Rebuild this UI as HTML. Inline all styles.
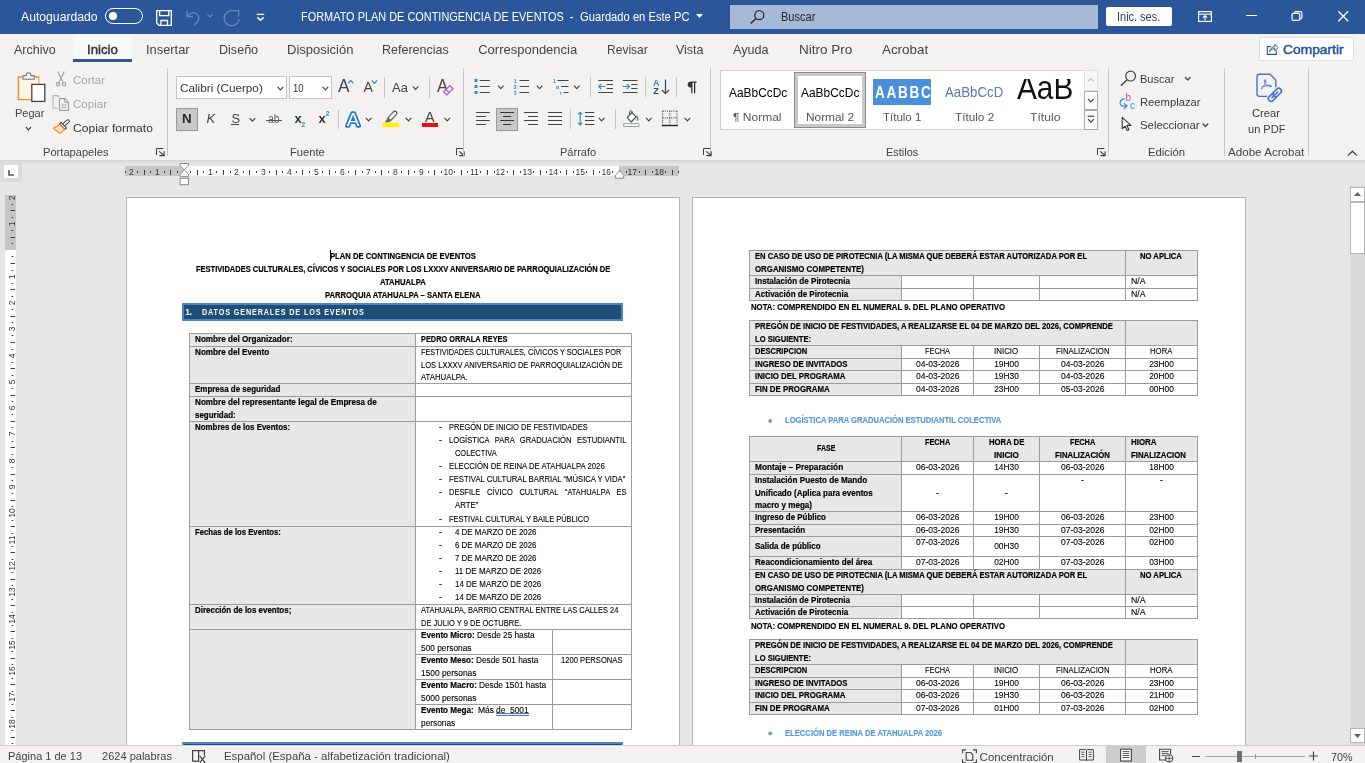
<!DOCTYPE html>
<html lang="es"><head><meta charset="utf-8"><title>FORMATO PLAN DE CONTINGENCIA DE EVENTOS - Word</title><style>
html,body{margin:0;padding:0;}
body{width:1365px;height:763px;overflow:hidden;position:relative;background:#e6e6e6;font-family:"Liberation Sans",sans-serif;}
#app{position:absolute;left:0;top:0;width:1365px;height:763px;overflow:hidden;will-change:transform;}
.b{position:absolute;box-sizing:border-box;display:block;}
.t{position:absolute;white-space:pre;line-height:1em;display:block;transform-origin:0 0;}
svg{overflow:visible;}
</style></head><body><div id="app">
<div class="b" style="left:0px;top:0px;width:1365px;height:34px;background:#2b579a;"></div>
<span class="t" style="left:21.00px;top:11px;font-size:12px;color:#fff;transform:scaleX(1.0159);">Autoguardado</span>
<div class="b" style="left:105px;top:8px;width:38px;height:16px;border:1.4px solid #fff;border-radius:8px;"></div>
<div class="b" style="left:108.5px;top:12px;width:8px;height:8px;background:#fff;border-radius:4px;"></div>
<svg class="b" style="left:156px;top:10px;" width="16" height="16" viewBox="0 0 16 16"><path d="M0.7 0.7h14.6v14.6h-12.2l-2.4-2.4z" fill="none" stroke="#fff" stroke-width="1.3"/><path d="M3.6 0.7v5h9.2v-5M4.9 15.3v-4.8h6.6v4.8" fill="none" stroke="#fff" stroke-width="1.3"/></svg>
<svg class="b" style="left:186px;top:9px;" width="15" height="17" viewBox="0 0 15 17"><path d="M1 1.5v6h6M1.2 7.2C4 3.2 9 2.6 11.6 5.6c2.6 3 1.2 7.6-3.6 10.4" fill="none" stroke="#6487c5" stroke-width="1.3"/></svg>
<svg class="b" style="left:207px;top:14px;" width="6" height="4" viewBox="0 0 6 4"><path d="M0.5 0.5l2.5 2.5l2.5-2.5" fill="none" stroke="#6487c5" stroke-width="1.1"/></svg>
<svg class="b" style="left:223px;top:9px;" width="18" height="18" viewBox="0 0 18 18"><path d="M15.7 7.4V1.7H8.6A7.5 7.5 0 1 0 16.1 10" fill="none" stroke="#6487c5" stroke-width="1.3"/></svg>
<svg class="b" style="left:256px;top:13px;" width="9" height="9" viewBox="0 0 9 9"><g transform="translate(0.6 0.4)"><path d="M0.2 1h7.4" stroke="#fff" stroke-width="1.3"/><path d="M0.8 4l3.1 2.8l3.1-2.8" fill="none" stroke="#fff" stroke-width="1.5"/></g></svg>
<span class="t" style="left:300.60px;top:11px;font-size:12px;color:#fff;transform:scaleX(0.9102);">FORMATO PLAN DE CONTINGENCIA DE EVENTOS</span>
<span class="t" style="left:569.40px;top:11px;font-size:12px;color:#fff;">-</span>
<span class="t" style="left:580.30px;top:11px;font-size:12px;color:#fff;transform:scaleX(0.9327);">Guardado en Este PC</span>
<svg class="b" style="left:696px;top:14px;" width="7" height="4" viewBox="0 0 7 4"><path d="M0 0h7l-3.5 4z" fill="#fff"/></svg>
<div class="b" style="left:730px;top:5px;width:368px;height:24px;background:#a6b9d6;"></div>
<svg class="b" style="left:750px;top:10px;" width="15" height="14" viewBox="0 0 15 14"><circle cx="9.3" cy="5.2" r="4.5" fill="none" stroke="#2a2a2a" stroke-width="1.3"/><path d="M6 8.6l-5.3 5" stroke="#2a2a2a" stroke-width="1.4"/></svg>
<span class="t" style="left:780.60px;top:11px;font-size:12px;color:#262626;transform:scaleX(0.9211);">Buscar</span>
<div class="b" style="left:1106px;top:7px;width:66px;height:19px;background:#fff;border-radius:2px;"></div>
<span class="t" style="left:1117.30px;top:11px;font-size:12px;color:#2b3f63;transform:scaleX(0.9124);">Inic. ses.</span>
<svg class="b" style="left:1198px;top:11px;" width="14" height="11" viewBox="0 0 14 11"><rect x="0.6" y="0.6" width="12.8" height="9.8" fill="none" stroke="#fff" stroke-width="1.2"/><path d="M0.6 3.2h12.8" stroke="#fff" stroke-width="1.1"/><path d="M7 9.2v-4.6M4.9 6.6l2.1-2.1l2.1 2.1" fill="none" stroke="#fff" stroke-width="1.1"/></svg>
<div class="b" style="left:1246px;top:15px;width:10.5px;height:1.2px;background:#fff;"></div>
<svg class="b" style="left:1291px;top:11px;" width="12" height="10" viewBox="0 0 12 10"><g transform="translate(0.5 0)"><rect x="0.6" y="2.4" width="7.6" height="7" rx="1.2" fill="none" stroke="#fff" stroke-width="1.2"/><path d="M2.8 2.2v-0.4c0-0.8 0.5-1.2 1.3-1.2h5.1c0.8 0 1.2 0.5 1.2 1.3v4.6c0 0.8-0.5 1.3-1.3 1.3h-0.7" fill="none" stroke="#fff" stroke-width="1.2"/></g></svg>
<svg class="b" style="left:1338px;top:11px;" width="11" height="11" viewBox="0 0 11 11"><path d="M0.3 0.3l9.9 9.9M10.2 0.3l-9.9 9.9" stroke="#fff" stroke-width="1.3"/></svg>
<div class="b" style="left:0px;top:34px;width:1365px;height:126px;background:#f3f2f1;"></div>
<div class="b" style="left:0;top:160px;width:1365px;height:5px;background:linear-gradient(#d3d3d3,#dfdfdf 45%,#e6e6e6)"></div>
<div class="b" style="left:73px;top:34px;width:59px;height:26px;background:#f8f8f8;"></div>
<div class="b" style="left:73px;top:59px;width:59px;height:3px;background:#2b579a;"></div>
<span class="t" style="left:14.30px;top:43px;font-size:13px;color:#444;transform:scaleX(0.9620);">Archivo</span>
<span class="t" style="left:146.20px;top:43px;font-size:13px;color:#444;transform:scaleX(0.9893);">Insertar</span>
<span class="t" style="left:219.20px;top:43px;font-size:13px;color:#444;transform:scaleX(0.9662);">Diseño</span>
<span class="t" style="left:287.00px;top:43px;font-size:13px;color:#444;">Disposición</span>
<span class="t" style="left:382.10px;top:43px;font-size:13px;color:#444;transform:scaleX(0.9615);">Referencias</span>
<span class="t" style="left:478.20px;top:43px;font-size:13px;color:#444;">Correspondencia</span>
<span class="t" style="left:606.50px;top:43px;font-size:13px;color:#444;transform:scaleX(0.9259);">Revisar</span>
<span class="t" style="left:676.20px;top:43px;font-size:13px;color:#444;transform:scaleX(0.9558);">Vista</span>
<span class="t" style="left:733.20px;top:43px;font-size:13px;color:#444;transform:scaleX(0.9720);">Ayuda</span>
<span class="t" style="left:799.40px;top:43px;font-size:13px;color:#444;transform:scaleX(1.0392);">Nitro Pro</span>
<span class="t" style="left:882.10px;top:43px;font-size:13px;color:#444;transform:scaleX(1.0290);">Acrobat</span>
<span class="t" style="left:86.60px;top:43px;font-size:13px;color:#333;transform:scaleX(1.0149);-webkit-text-stroke:0.45px #333;">Inicio</span>
<div class="b" style="left:1259px;top:37px;width:95px;height:24px;background:#fff;border:1px solid #e1dfdd;border-radius:2px;"></div>
<svg class="b" style="left:1266px;top:43px;" width="13" height="12" viewBox="0 0 13 12"><g transform="translate(0.5 0)"><path d="M4.4 3.6h-3.6v7.8h9v-3.6" fill="none" stroke="#2b579a" stroke-width="1.1"/><path d="M3.2 8.6c0.3-3 2.2-4.8 5.2-4.9v-2.4l3.2 3.3l-3.2 3.3v-2.3c-2.4 0-3.9 0.9-5.2 3z" fill="none" stroke="#2b579a" stroke-width="1" stroke-linejoin="round"/></g></svg>
<span class="t" style="left:1283.20px;top:43px;font-size:13px;color:#2b579a;transform:scaleX(1.0619);-webkit-text-stroke:0.5px #2b579a;">Compartir</span>
<svg class="b" style="left:17px;top:71px;" width="29" height="32" viewBox="0 0 29 32"><path d="M5.5 6h-4v22.5h13" fill="none" stroke="#e8912d" stroke-width="1.6"/><path d="M17.5 6h4v8" fill="none" stroke="#e8912d" stroke-width="1.6"/><path d="M2.4 7h19v21h-19z" fill="#fdf3e6" stroke="none"/><path d="M6 8.2v-3.6h3.2c0-1.8 1-2.9 2.4-2.9s2.4 1.1 2.4 2.9h3.2v3.6z" fill="#f3f2f1" stroke="#7a7a7a" stroke-width="1.1"/><rect x="14.8" y="13.4" width="13" height="17" fill="#fff" stroke="#444" stroke-width="1.3"/></svg>
<span class="t" style="left:14.50px;top:108px;font-size:11.5px;color:#444;transform:scaleX(0.9548);">Pegar</span>
<svg class="b" style="left:25px;top:127px;" width="6" height="3" viewBox="0 0 6 3"><g transform="translate(0.8 0)"><path d="M0 0l2.6 2.8l2.6 -2.8" fill="none" stroke="#444" stroke-width="1.2"/></g></svg>
<svg class="b" style="left:55px;top:71px;" width="12" height="16" viewBox="0 0 12 16"><g transform="translate(0.5 0)"><path d="M2.2 0.5l5.4 11M8.8 0.5l-5.4 11" stroke="#a0a0a0" stroke-width="1.1" fill="none"/><circle cx="2.4" cy="13.3" r="1.7" fill="none" stroke="#a0a0a0" stroke-width="1.1"/><circle cx="8.6" cy="13.3" r="1.7" fill="none" stroke="#a0a0a0" stroke-width="1.1"/></g></svg>
<span class="t" style="left:72.70px;top:75px;font-size:11.5px;color:#a6a6a6;transform:scaleX(1.0047);">Cortar</span>
<svg class="b" style="left:52px;top:95px;" width="18" height="16" viewBox="0 0 18 16"><g transform="translate(0.5 0)"><path d="M6 2.2v-1.6h-5.4v12.6h4.6" fill="none" stroke="#b4b4b4" stroke-width="1.1"/><path d="M7 3.6h5.4l3.6 3.6v8.2h-9z" fill="#f3f2f1" stroke="#a0a0a0" stroke-width="1.1"/><path d="M12.2 3.8v3.6h3.6" fill="none" stroke="#a0a0a0" stroke-width="1"/><path d="M9 10h5M9 12.4h5" stroke="#a0a0a0" stroke-width="1"/></g></svg>
<span class="t" style="left:72.70px;top:99px;font-size:11.5px;color:#a6a6a6;transform:scaleX(1.0066);">Copiar</span>
<svg class="b" style="left:53px;top:119px;" width="17" height="15" viewBox="0 0 17 15"><path d="M10.2 4.6l3.6-3.4c0.8-0.7 1.7-0.6 2.2 0c0.5 0.6 0.5 1.5-0.2 2.1l-3.8 3.3" fill="#fff" stroke="#444" stroke-width="1.1"/><path d="M8.2 3.4l5.2 5.6l-1.6 1.5l-5.2-5.6z" fill="#fff" stroke="#444" stroke-width="1.1"/><path d="M6.4 5.2l5 5.4l-4.6 3.8l-6.2-5.2c2.2-0.6 4.2-1.8 5.8-4z" fill="#fbe3c4" stroke="#e8912d" stroke-width="1.2" stroke-linejoin="round"/></svg>
<span class="t" style="left:72.70px;top:123px;font-size:11.5px;color:#333;transform:scaleX(1.0505);">Copiar formato</span>
<span class="t" style="left:42.80px;top:147px;font-size:11.5px;color:#444;transform:scaleX(0.9665);">Portapapeles</span>
<svg class="b" style="left:156px;top:148px;" width="9" height="9" viewBox="0 0 9 9"><path d="M0.5 7v-6.5h6.8" fill="none" stroke="#3c3c3c" stroke-width="1"/><path d="M3.2 3.3l4.8 4.2M3.4 7.6h4.7v-4.4" fill="none" stroke="#3c3c3c" stroke-width="1.05"/></svg>
<div class="b" style="left:167px;top:68px;width:1px;height:88px;background:#c8c6c4;"></div>
<div class="b" style="left:176px;top:76px;width:110.5px;height:22.5px;background:#fff;border:1px solid #c8c6c4;"></div>
<span class="t" style="left:179.80px;top:83px;font-size:11.5px;color:#333;transform:scaleX(1.0202);">Calibri (Cuerpo)</span>
<svg class="b" style="left:277px;top:86px;" width="7" height="4" viewBox="0 0 7 4"><g transform="translate(0.6 0.8)"><path d="M0 0l2.8 3l2.8 -3" fill="none" stroke="#444" stroke-width="1.2"/></g></svg>
<div class="b" style="left:289.3px;top:76px;width:42.5px;height:22.5px;background:#fff;border:1px solid #c8c6c4;"></div>
<span class="t" style="left:293.00px;top:83px;font-size:11.5px;color:#333;transform:scaleX(0.8287);">10</span>
<svg class="b" style="left:322px;top:86px;" width="7" height="4" viewBox="0 0 7 4"><g transform="translate(0.6 0.8)"><path d="M0 0l2.8 3l2.8 -3" fill="none" stroke="#444" stroke-width="1.2"/></g></svg>
<div class="b" style="left:176px;top:108px;width:22px;height:22.7px;background:#c8c8c8;border:1px solid #9a9a9a;"></div>
<span class="t" style="left:181.60px;top:112px;font-size:13px;color:#262626;font-weight:700;transform:scaleX(1.0226);">N</span>
<span class="t" style="left:206.60px;top:112px;font-size:13px;color:#444;font-style:italic;">K</span>
<span class="t" style="left:231.60px;top:112px;font-size:13px;color:#444;">S</span>
<div class="b" style="left:231px;top:124px;width:8px;height:1.1px;background:#444;"></div>
<svg class="b" style="left:249px;top:118px;" width="7" height="4" viewBox="0 0 7 4"><g transform="translate(0.6 0.2)"><path d="M0 0l2.8 3l2.8 -3" fill="none" stroke="#444" stroke-width="1.2"/></g></svg>
<span class="t" style="left:268.20px;top:113px;font-size:12.5px;color:#666;transform:scaleX(0.8343);">ab</span>
<div class="b" style="left:266.3px;top:119.7px;width:15.5px;height:1px;background:#555;"></div>
<span class="t" style="left:294.40px;top:112px;font-size:13px;color:#333;font-weight:700;">x</span>
<span class="t" style="left:301.40px;top:122px;font-size:6.5px;color:#2e8bd6;font-weight:700;">2</span>
<span class="t" style="left:318.40px;top:112px;font-size:13px;color:#333;font-weight:700;">x</span>
<span class="t" style="left:325.70px;top:111px;font-size:6.5px;color:#2e8bd6;font-weight:700;">2</span>
<div class="b" style="left:337.5px;top:110px;width:1px;height:19.400000000000006px;background:#c8c6c4;"></div>
<span class="t" style="left:338.00px;top:77px;font-size:18px;color:#444;transform:scaleX(0.9579);">A</span>
<svg class="b" style="left:348px;top:80px;" width="6" height="4" viewBox="0 0 6 4"><g transform="translate(0.1 0.4)"><path d="M0 3l2.6-3l2.6 3" fill="none" stroke="#2e8bd6" stroke-width="1.2"/></g></svg>
<span class="t" style="left:363.60px;top:80px;font-size:14px;color:#444;">A</span>
<svg class="b" style="left:371px;top:80px;" width="7" height="4" viewBox="0 0 7 4"><g transform="translate(0.9 0.4)"><path d="M0 0l2.6 3l2.6-3" fill="none" stroke="#2e8bd6" stroke-width="1.2"/></g></svg>
<div class="b" style="left:384px;top:77px;width:1px;height:20.700000000000003px;background:#c8c6c4;"></div>
<span class="t" style="left:392.40px;top:81px;font-size:13.5px;color:#444;transform:scaleX(0.9629);">Aa</span>
<svg class="b" style="left:412px;top:86px;" width="7" height="4" viewBox="0 0 7 4"><g transform="translate(0.8 0.4)"><path d="M0 0l2.8 3l2.8 -3" fill="none" stroke="#444" stroke-width="1.2"/></g></svg>
<div class="b" style="left:429px;top:77px;width:1px;height:20.700000000000003px;background:#c8c6c4;"></div>
<span class="t" style="left:437.00px;top:77px;font-size:18px;color:#444;transform:scaleX(0.9162);">A</span>
<svg class="b" style="left:443px;top:85px;" width="11" height="11" viewBox="0 0 11 11"><path d="M0.6 6.8l6.2-6.2l3.2 3.2l-6.2 6.2z" fill="#f3f2f1" stroke="#b04fc4" stroke-width="1.2"/><path d="M3 4.4l3.2 3.2" stroke="#b04fc4" stroke-width="1.1"/></svg>
<svg class="b" style="left:342px;top:108px;" width="22" height="22" viewBox="0 0 22 22"><text x="11" y="17.6" text-anchor="middle" font-family="Liberation Sans" font-size="19" font-weight="400" fill="#fff" stroke="#2576cf" stroke-width="3.4" paint-order="stroke" stroke-linejoin="round">A</text></svg>
<svg class="b" style="left:365px;top:117px;" width="7" height="4" viewBox="0 0 7 4"><g transform="translate(0.8 0.8)"><path d="M0 0l2.8 3l2.8 -3" fill="none" stroke="#444" stroke-width="1.2"/></g></svg>
<svg class="b" style="left:382px;top:110px;" width="18" height="18" viewBox="0 0 18 18"><g transform="translate(0.5 0.5)"><path d="M10.8 1.4c0.9-0.9 2.2-1 3-0.2c0.8 0.8 0.7 2-0.1 2.9l-5.6 6l-2.7-2.6z" fill="#fff" stroke="#555" stroke-width="1.1"/><path d="M5.4 7.5l2.7 2.6l-1.6 1.3l-3.6 0.3z" fill="#666" stroke="#666" stroke-width="0.6"/><rect x="0.3" y="12.3" width="16.2" height="4.2" fill="#fff200"/></g></svg>
<svg class="b" style="left:405px;top:117px;" width="7" height="4" viewBox="0 0 7 4"><g transform="translate(0.7 0.8)"><path d="M0 0l2.8 3l2.8 -3" fill="none" stroke="#444" stroke-width="1.2"/></g></svg>
<span class="t" style="left:425.20px;top:109px;font-size:15px;color:#444;transform:scaleX(0.9595);">A</span>
<div class="b" style="left:422px;top:122.8px;width:16px;height:4.2px;background:#e60f0f;"></div>
<svg class="b" style="left:444px;top:117px;" width="7" height="4" viewBox="0 0 7 4"><g transform="translate(0.5 0.8)"><path d="M0 0l2.8 3l2.8 -3" fill="none" stroke="#444" stroke-width="1.2"/></g></svg>
<span class="t" style="left:289.80px;top:147px;font-size:11.5px;color:#444;transform:scaleX(0.9720);">Fuente</span>
<svg class="b" style="left:456px;top:148px;" width="9" height="9" viewBox="0 0 9 9"><path d="M0.5 7v-6.5h6.8" fill="none" stroke="#3c3c3c" stroke-width="1"/><path d="M3.2 3.3l4.8 4.2M3.4 7.6h4.7v-4.4" fill="none" stroke="#3c3c3c" stroke-width="1.05"/></svg>
<div class="b" style="left:463px;top:68px;width:1px;height:88px;background:#c8c6c4;"></div>
<svg class="b" style="left:474px;top:79px;" width="17" height="16" viewBox="0 0 17 16"><g transform="translate(0.5 0)"><rect x="0" y="0" width="3" height="3" fill="#2e8bd6"/><rect x="0" y="6" width="3" height="3" fill="#2e8bd6"/><rect x="0" y="12" width="3" height="3" fill="#2e8bd6"/><path d="M5.2 1.5H15.2M5.2 7.5H15.2M5.2 13.5H15.2" stroke="#444" stroke-width="1.1" fill="none"/></g></svg>
<svg class="b" style="left:498px;top:85px;" width="6" height="4" viewBox="0 0 6 4"><g transform="translate(0 0.6)"><path d="M0 0l2.8 3l2.8 -3" fill="none" stroke="#444" stroke-width="1.2"/></g></svg>
<svg class="b" style="left:513px;top:79px;" width="17" height="16" viewBox="0 0 17 16"><g transform="translate(0.5 0)"><text x="0.2" y="3.8" font-family="Liberation Sans" font-size="5.2" font-weight="700" fill="#2e8bd6">1</text><text x="0.2" y="9.8" font-family="Liberation Sans" font-size="5.2" font-weight="700" fill="#2e8bd6">2</text><text x="0.2" y="15.8" font-family="Liberation Sans" font-size="5.2" font-weight="700" fill="#2e8bd6">3</text><path d="M6 1.5H15.6M6 7.5H15.6M6 13.5H15.6" stroke="#444" stroke-width="1.1" fill="none"/></g></svg>
<svg class="b" style="left:536px;top:85px;" width="7" height="4" viewBox="0 0 7 4"><g transform="translate(0.8 0.6)"><path d="M0 0l2.8 3l2.8 -3" fill="none" stroke="#444" stroke-width="1.2"/></g></svg>
<svg class="b" style="left:552px;top:79px;" width="17" height="16" viewBox="0 0 17 16"><g transform="translate(0.9 0)"><text x="0.2" y="3.8" font-family="Liberation Sans" font-size="5.2" font-weight="700" fill="#2e8bd6">1</text><text x="3.2" y="9.8" font-family="Liberation Sans" font-size="5.6" font-weight="700" fill="#2e8bd6">a</text><text x="7" y="15.8" font-family="Liberation Sans" font-size="5.6" font-weight="700" fill="#2e8bd6">i</text><path d="M4.6 1.5H15.6M8.2 7.5H15.6M10.8 13.5H15.6" stroke="#444" stroke-width="1.1" fill="none"/></g></svg>
<svg class="b" style="left:574px;top:85px;" width="6" height="4" viewBox="0 0 6 4"><g transform="translate(0 0.6)"><path d="M0 0l2.8 3l2.8 -3" fill="none" stroke="#444" stroke-width="1.2"/></g></svg>
<div class="b" style="left:590.3px;top:77.2px;width:1px;height:20.099999999999994px;background:#c8c6c4;"></div>
<svg class="b" style="left:598px;top:79px;" width="16" height="15" viewBox="0 0 16 15"><g transform="translate(0.3 0.5)"><path d="M0 1H14.7M8.4 5H14.7M8.4 9H14.7M0 13H14.7" stroke="#444" stroke-width="1.1" fill="none"/><path d="M0.4 7h6.6M3 4.4l-2.6 2.6l2.6 2.6" fill="none" stroke="#2e8bd6" stroke-width="1.2"/></g></svg>
<svg class="b" style="left:622px;top:79px;" width="16" height="15" viewBox="0 0 16 15"><g transform="translate(0.8 0.5)"><path d="M0 1H14.7M8.4 5H14.7M8.4 9H14.7M0 13H14.7" stroke="#444" stroke-width="1.1" fill="none"/><path d="M0 7h6.6M4 4.4l2.6 2.6l-2.6 2.6" fill="none" stroke="#2e8bd6" stroke-width="1.2"/></g></svg>
<div class="b" style="left:645.2px;top:77.2px;width:1px;height:20.099999999999994px;background:#c8c6c4;"></div>
<span class="t" style="left:653.00px;top:79px;font-size:9px;color:#2e8bd6;font-weight:700;">A</span>
<span class="t" style="left:653.20px;top:87px;font-size:9px;color:#444;font-weight:700;">Z</span>
<svg class="b" style="left:661px;top:79px;" width="9" height="16" viewBox="0 0 9 16"><g transform="translate(0.5 0.5)"><path d="M4 0v14M0.4 10.4l3.6 3.8l3.6-3.8" fill="none" stroke="#444" stroke-width="1.2"/></g></svg>
<div class="b" style="left:676.3px;top:77.2px;width:1px;height:20.099999999999994px;background:#c8c6c4;"></div>
<svg class="b" style="left:686px;top:81px;" width="11" height="13" viewBox="0 0 11 13"><g transform="translate(0.8 0.3)"><path d="M5 0.1h4.8v1.4h-1.3v10.4h-1.3v-10.4h-1.5v10.4h-1.3v-5.6c-2.2 0-3.6-1.2-3.6-3.1c0-1.9 1.5-3.1 4.2-3.1z" fill="#333"/></g></svg>
<div class="b" style="left:710px;top:68px;width:1px;height:88px;background:#c8c6c4;"></div>
<svg class="b" style="left:476px;top:111px;" width="14" height="15" viewBox="0 0 14 15"><g transform="translate(0 0.5)"><path d="M0 1H13.8M0 5H9.8M0 9H13.8M0 13H9.8" stroke="#444" stroke-width="1.1" fill="none"/></g></svg>
<div class="b" style="left:496px;top:108px;width:22px;height:22.9px;background:#c8c8c8;border:1px solid #9a9a9a;"></div>
<svg class="b" style="left:500px;top:111px;" width="15" height="15" viewBox="0 0 15 15"><g transform="translate(0.2 0.5)"><path d="M0 1H13.9M2.8 5H11M0 9H13.9M2.8 13H11" stroke="#333" stroke-width="1.1" fill="none"/></g></svg>
<svg class="b" style="left:524px;top:111px;" width="14" height="15" viewBox="0 0 14 15"><g transform="translate(0 0.5)"><path d="M0 1H13.9M4 5H13.9M0 9H13.9M4 13H13.9" stroke="#444" stroke-width="1.1" fill="none"/></g></svg>
<svg class="b" style="left:547px;top:111px;" width="16" height="15" viewBox="0 0 16 15"><g transform="translate(0.9 0.5)"><path d="M0 1H14.2M0 5H14.2M0 9H14.2M0 13H14.2" stroke="#444" stroke-width="1.1" fill="none"/></g></svg>
<div class="b" style="left:570.4px;top:109px;width:1px;height:20px;background:#c8c6c4;"></div>
<svg class="b" style="left:578px;top:111px;" width="17" height="15" viewBox="0 0 17 15"><g transform="translate(0 0.5)"><path d="M2.2 0.8v12.6M0.2 2.9l2-2.1l2 2.1M0.2 11.3l2 2.1l2-2.1" fill="none" stroke="#2e8bd6" stroke-width="1.2"/><path d="M7 1H16.2M7 5H16.2M7 9H16.2M7 13H16.2" stroke="#444" stroke-width="1.1" fill="none"/></g></svg>
<svg class="b" style="left:598px;top:117px;" width="7" height="4" viewBox="0 0 7 4"><g transform="translate(0.8 0.8)"><path d="M0 0l2.8 3l2.8 -3" fill="none" stroke="#444" stroke-width="1.2"/></g></svg>
<div class="b" style="left:615.3px;top:109px;width:1px;height:20px;background:#c8c6c4;"></div>
<svg class="b" style="left:623px;top:110px;" width="17" height="17" viewBox="0 0 17 17"><g transform="translate(0.3 0.8)"><path d="M4 6.6l4.6-4.8l4.2 4.2l-5 5.2z" fill="#fff" stroke="#444" stroke-width="1.1" stroke-linejoin="round"/><path d="M8.8 2v-1.2c0-0.6-0.4-0.8-0.8-0.8h-0.8c-0.5 0-0.8 0.3-0.8 0.8v3.4" fill="none" stroke="#444" stroke-width="1"/><path d="M12.8 5.2c1.4 1 2 2.6 1.4 4.6" fill="none" stroke="#2e8bd6" stroke-width="1.4"/><rect x="0.5" y="12.9" width="15" height="2.8" fill="#fff" stroke="#9a9a9a" stroke-width="1"/></g></svg>
<svg class="b" style="left:646px;top:117px;" width="6" height="4" viewBox="0 0 6 4"><g transform="translate(0 0.8)"><path d="M0 0l2.8 3l2.8 -3" fill="none" stroke="#444" stroke-width="1.2"/></g></svg>
<svg class="b" style="left:661px;top:110px;" width="17" height="17" viewBox="0 0 17 17"><g transform="translate(0.6 0.5)"><path d="M1 0.6H15.6M1 0.6V14M15.4 0.6V14M8.2 0.6V14M1 7.4H15.6" fill="none" stroke="#333" stroke-width="1" stroke-dasharray="1 1.15"/><path d="M0.2 15H16.2" stroke="#222" stroke-width="1.4"/></g></svg>
<svg class="b" style="left:684px;top:117px;" width="7" height="4" viewBox="0 0 7 4"><g transform="translate(0.6 0.8)"><path d="M0 0l2.8 3l2.8 -3" fill="none" stroke="#444" stroke-width="1.2"/></g></svg>
<span class="t" style="left:560.20px;top:147px;font-size:11.5px;color:#444;transform:scaleX(0.9599);">Párrafo</span>
<svg class="b" style="left:703px;top:148px;" width="9" height="9" viewBox="0 0 9 9"><path d="M0.5 7v-6.5h6.8" fill="none" stroke="#3c3c3c" stroke-width="1"/><path d="M3.2 3.3l4.8 4.2M3.4 7.6h4.7v-4.4" fill="none" stroke="#3c3c3c" stroke-width="1.05"/></svg>
<div class="b" style="left:720px;top:70px;width:378px;height:59.5px;background:#fff;border:1px solid #d2d0ce;"></div>
<span class="t" style="left:728.90px;top:87px;font-size:12.2px;color:#000;transform:scaleX(0.9781);">AaBbCcDc</span>
<span class="t" style="left:733.30px;top:112px;font-size:11.5px;color:#555;transform:scaleX(1.0445);">¶ Normal</span>
<div class="b" style="left:794px;top:72px;width:72px;height:55.7px;background:#fff;border:1px solid #8a8a8a;"></div>
<div class="b" style="left:795px;top:73px;width:70px;height:53.7px;border:3px solid #c8c8c8;"></div>
<span class="t" style="left:801.00px;top:87px;font-size:12.2px;color:#000;transform:scaleX(0.9798);">AaBbCcDc</span>
<span class="t" style="left:805.50px;top:112px;font-size:11.5px;color:#555;transform:scaleX(1.0311);">Normal 2</span>
<div class="b" style="left:873px;top:79.3px;width:58.2px;height:25.5px;background:#4a90d9;"></div>
<span class="t" style="left:874.60px;top:85px;font-size:16px;color:#fff;font-weight:700;transform:scaleX(0.8484);letter-spacing:2px;">AABBC</span>
<span class="t" style="left:883.00px;top:112px;font-size:11.5px;color:#555;">Título 1</span>
<span class="t" style="left:944.80px;top:85px;font-size:14.6px;color:#5b79b0;transform:scaleX(0.9083);">AaBbCcD</span>
<span class="t" style="left:954.80px;top:112px;font-size:11.5px;color:#555;transform:scaleX(1.0221);">Título 2</span>
<div class="b" style="left:1012px;top:79px;width:66px;height:26px;overflow:hidden"><span class="t" style="left:4.6px;top:-9px;font-size:34px;color:#111;transform:scaleX(0.875);transform-origin:0 0;">AaB</span></div>
<span class="t" style="left:1030.30px;top:112px;font-size:11.5px;color:#555;transform:scaleX(1.0570);">Título</span>
<div class="b" style="left:1083.5px;top:70px;width:14.5px;height:20.7px;background:#f7f7f7;border:1px solid #e3e3e3;"></div>
<svg class="b" style="left:1088px;top:78px;" width="6" height="4" viewBox="0 0 6 4"><g transform="translate(0 0.5)"><path d="M0 3l2.8-3l2.8 3" fill="none" stroke="#c0c0c0" stroke-width="1.1"/></g></svg>
<div class="b" style="left:1083.5px;top:91px;width:14.5px;height:18.5px;background:#fbfbfb;border:1px solid #ababab;"></div>
<svg class="b" style="left:1088px;top:98px;" width="6" height="4" viewBox="0 0 6 4"><g transform="translate(0 0.8)"><path d="M0 0l2.8 3l2.8 -3" fill="none" stroke="#444" stroke-width="1.2"/></g></svg>
<div class="b" style="left:1083.5px;top:110px;width:14.5px;height:19.5px;background:#fbfbfb;border:1px solid #ababab;"></div>
<svg class="b" style="left:1087px;top:115px;" width="8" height="8" viewBox="0 0 8 8"><g transform="translate(0.6 0.6)"><path d="M0 0.6h6.6" stroke="#444" stroke-width="1.1"/><path d="M0.4 3.6l2.9 3l2.9-3" fill="none" stroke="#444" stroke-width="1.2"/></g></svg>
<span class="t" style="left:885.60px;top:147px;font-size:11.5px;color:#444;transform:scaleX(0.9507);">Estilos</span>
<svg class="b" style="left:1097px;top:148px;" width="9" height="9" viewBox="0 0 9 9"><path d="M0.5 7v-6.5h6.8" fill="none" stroke="#3c3c3c" stroke-width="1"/><path d="M3.2 3.3l4.8 4.2M3.4 7.6h4.7v-4.4" fill="none" stroke="#3c3c3c" stroke-width="1.05"/></svg>
<div class="b" style="left:1108px;top:68px;width:1px;height:88px;background:#c8c6c4;"></div>
<svg class="b" style="left:1120px;top:70px;" width="17" height="17" viewBox="0 0 17 17"><g transform="translate(0.6 0.5)"><circle cx="10" cy="5.6" r="4.9" fill="none" stroke="#444" stroke-width="1.2"/><path d="M6.4 9.2l-6 6" stroke="#444" stroke-width="1.4"/></g></svg>
<span class="t" style="left:1139.60px;top:74px;font-size:11.5px;color:#3b3b3b;transform:scaleX(0.9583);">Buscar</span>
<svg class="b" style="left:1185px;top:77px;" width="6" height="3" viewBox="0 0 6 3"><path d="M0 0l2.8 3l2.8 -3" fill="none" stroke="#444" stroke-width="1.2"/></svg>
<span class="t" style="left:1125.60px;top:93px;font-size:10px;color:#b04fc4;">b</span>
<span class="t" style="left:1130.00px;top:101px;font-size:10px;color:#2e8bd6;">c</span>
<svg class="b" style="left:1119px;top:98px;" width="10" height="11" viewBox="0 0 10 11"><g transform="translate(0.3 0)"><path d="M5.4 0.6c-3 0.6-4.6 2.4-4.6 4.6c0 1.4 0.8 2.4 2 2.9h4.6M4.6 5.2l3.2 2.9l-3.2 2.9" fill="none" stroke="#2e8bd6" stroke-width="1.2"/></g></svg>
<span class="t" style="left:1139.60px;top:97px;font-size:11.5px;color:#3b3b3b;transform:scaleX(0.9758);">Reemplazar</span>
<svg class="b" style="left:1121px;top:116px;" width="12" height="16" viewBox="0 0 12 16"><g transform="translate(0.5 0.5)"><path d="M0.7 0.9v11.4l2.9-2.7l2 4.5l1.8-0.8l-2-4.4h4z" fill="#fff" stroke="#333" stroke-width="1.1" stroke-linejoin="round"/></g></svg>
<span class="t" style="left:1139.60px;top:120px;font-size:11.5px;color:#3b3b3b;transform:scaleX(0.9919);">Seleccionar</span>
<svg class="b" style="left:1202px;top:123px;" width="7" height="4" viewBox="0 0 7 4"><g transform="translate(0.6 0.5)"><path d="M0 0l2.8 3l2.8 -3" fill="none" stroke="#444" stroke-width="1.2"/></g></svg>
<span class="t" style="left:1147.60px;top:147px;font-size:11.5px;color:#444;transform:scaleX(0.9810);">Edición</span>
<div class="b" style="left:1224px;top:68px;width:1px;height:88px;background:#c8c6c4;"></div>
<svg class="b" style="left:1255px;top:72px;" width="29" height="31" viewBox="0 0 29 31"><g transform="translate(0.2 0.6)"><path d="M14 23.8h-9.6c-1.7 0-2.6-0.9-2.6-2.6v-17c0-1.7 0.9-2.6 2.6-2.6h10.4l5.8 5.8v7.4" fill="none" stroke="#4a6fd8" stroke-width="1.4"/><path d="M6.6 14.6c2.6-1.2 4.2-4 4-6.8c-0.1-1-1.3-1-1.4 0c-0.3 2.8 2.4 6 6.4 6.2c1 0 1-1.2 0-1.3c-3-0.3-7 0.6-9 2.6c-0.6 0.8 0 1.4 0.8 0.8" fill="none" stroke="#4a6fd8" stroke-width="0.9"/><g transform="translate(19.7 22.2) rotate(-45)"><rect x="-8" y="-2.7" width="9.4" height="5.4" rx="2.7" fill="#f3f2f1" stroke="#f3f2f1" stroke-width="3.6"/><rect x="-1.4" y="-2.7" width="9.4" height="5.4" rx="2.7" fill="#f3f2f1" stroke="#f3f2f1" stroke-width="3.6"/><rect x="-8" y="-2.7" width="9.4" height="5.4" rx="2.7" fill="none" stroke="#4a6fd8" stroke-width="1.6"/><rect x="-1.4" y="-2.7" width="9.4" height="5.4" rx="2.7" fill="#f3f2f1" stroke="#4a6fd8" stroke-width="1.6"/><path d="M-1.2 -2.7h2.4" stroke="#4a6fd8" stroke-width="1.6"/><path d="M-4 0h8" stroke="#4a6fd8" stroke-width="1.6" stroke-linecap="round"/></g></g></svg>
<span class="t" style="left:1252.40px;top:108px;font-size:11.5px;color:#3b3b3b;transform:scaleX(0.9702);">Crear</span>
<span class="t" style="left:1247.60px;top:124px;font-size:11.5px;color:#3b3b3b;transform:scaleX(0.9593);">un PDF</span>
<span class="t" style="left:1228.20px;top:147px;font-size:11.5px;color:#444;transform:scaleX(1.0095);">Adobe Acrobat</span>
<div class="b" style="left:1308px;top:68px;width:1px;height:88px;background:#c8c6c4;"></div>
<svg class="b" style="left:1347px;top:150px;" width="11" height="6" viewBox="0 0 11 6"><g transform="translate(0.4 0.6)"><path d="M0.4 5l4.6-4.4l4.6 4.4" fill="none" stroke="#444" stroke-width="1.3"/></g></svg>
<div class="b" style="left:125px;top:166px;width:554px;height:10px;background:#fff;"></div>
<div class="b" style="left:125px;top:166px;width:59px;height:10px;background:#c6c6c6;"></div>
<div class="b" style="left:619px;top:166px;width:60px;height:10px;background:#c6c6c6;"></div>
<svg class="b" style="left:125px;top:166px;" width="554" height="10" viewBox="0 0 554 10"><rect x="0" y="5" width="1" height="2" fill="#3c3c3c"/><rect x="12" y="5" width="1" height="2" fill="#3c3c3c"/><rect x="19" y="4" width="1" height="5" fill="#3c3c3c"/><rect x="25" y="5" width="1" height="2" fill="#3c3c3c"/><rect x="39" y="5" width="1" height="2" fill="#3c3c3c"/><rect x="45" y="4" width="1" height="5" fill="#3c3c3c"/><rect x="52" y="5" width="1" height="2" fill="#3c3c3c"/><rect x="65" y="5" width="1" height="2" fill="#3c3c3c"/><rect x="72" y="4" width="1" height="5" fill="#3c3c3c"/><rect x="78" y="5" width="1" height="2" fill="#3c3c3c"/><rect x="91" y="5" width="1" height="2" fill="#3c3c3c"/><rect x="98" y="4" width="1" height="5" fill="#3c3c3c"/><rect x="105" y="5" width="1" height="2" fill="#3c3c3c"/><rect x="118" y="5" width="1" height="2" fill="#3c3c3c"/><rect x="124" y="4" width="1" height="5" fill="#3c3c3c"/><rect x="131" y="5" width="1" height="2" fill="#3c3c3c"/><rect x="144" y="5" width="1" height="2" fill="#3c3c3c"/><rect x="151" y="4" width="1" height="5" fill="#3c3c3c"/><rect x="157" y="5" width="1" height="2" fill="#3c3c3c"/><rect x="171" y="5" width="1" height="2" fill="#3c3c3c"/><rect x="177" y="4" width="1" height="5" fill="#3c3c3c"/><rect x="184" y="5" width="1" height="2" fill="#3c3c3c"/><rect x="197" y="5" width="1" height="2" fill="#3c3c3c"/><rect x="204" y="4" width="1" height="5" fill="#3c3c3c"/><rect x="210" y="5" width="1" height="2" fill="#3c3c3c"/><rect x="223" y="5" width="1" height="2" fill="#3c3c3c"/><rect x="230" y="4" width="1" height="5" fill="#3c3c3c"/><rect x="237" y="5" width="1" height="2" fill="#3c3c3c"/><rect x="250" y="5" width="1" height="2" fill="#3c3c3c"/><rect x="256" y="4" width="1" height="5" fill="#3c3c3c"/><rect x="263" y="5" width="1" height="2" fill="#3c3c3c"/><rect x="276" y="5" width="1" height="2" fill="#3c3c3c"/><rect x="283" y="4" width="1" height="5" fill="#3c3c3c"/><rect x="289" y="5" width="1" height="2" fill="#3c3c3c"/><rect x="303" y="5" width="1" height="2" fill="#3c3c3c"/><rect x="309" y="4" width="1" height="5" fill="#3c3c3c"/><rect x="316" y="5" width="1" height="2" fill="#3c3c3c"/><rect x="329" y="5" width="1" height="2" fill="#3c3c3c"/><rect x="336" y="4" width="1" height="5" fill="#3c3c3c"/><rect x="342" y="5" width="1" height="2" fill="#3c3c3c"/><rect x="355" y="5" width="1" height="2" fill="#3c3c3c"/><rect x="362" y="4" width="1" height="5" fill="#3c3c3c"/><rect x="369" y="5" width="1" height="2" fill="#3c3c3c"/><rect x="382" y="5" width="1" height="2" fill="#3c3c3c"/><rect x="388" y="4" width="1" height="5" fill="#3c3c3c"/><rect x="395" y="5" width="1" height="2" fill="#3c3c3c"/><rect x="408" y="5" width="1" height="2" fill="#3c3c3c"/><rect x="415" y="4" width="1" height="5" fill="#3c3c3c"/><rect x="421" y="5" width="1" height="2" fill="#3c3c3c"/><rect x="435" y="5" width="1" height="2" fill="#3c3c3c"/><rect x="441" y="4" width="1" height="5" fill="#3c3c3c"/><rect x="448" y="5" width="1" height="2" fill="#3c3c3c"/><rect x="461" y="5" width="1" height="2" fill="#3c3c3c"/><rect x="468" y="4" width="1" height="5" fill="#3c3c3c"/><rect x="474" y="5" width="1" height="2" fill="#3c3c3c"/><rect x="487" y="5" width="1" height="2" fill="#3c3c3c"/><rect x="494" y="4" width="1" height="5" fill="#3c3c3c"/><rect x="501" y="5" width="1" height="2" fill="#3c3c3c"/><rect x="514" y="5" width="1" height="2" fill="#3c3c3c"/><rect x="520" y="4" width="1" height="5" fill="#3c3c3c"/><rect x="527" y="5" width="1" height="2" fill="#3c3c3c"/><rect x="540" y="5" width="1" height="2" fill="#3c3c3c"/><rect x="547" y="4" width="1" height="5" fill="#3c3c3c"/><rect x="553" y="5" width="1" height="2" fill="#3c3c3c"/></svg>
<span class="t" style="left:128.94px;top:168px;font-size:8.5px;color:#333;">2</span>
<span class="t" style="left:154.94px;top:168px;font-size:8.5px;color:#333;">1</span>
<span class="t" style="left:207.94px;top:168px;font-size:8.5px;color:#333;">1</span>
<span class="t" style="left:233.94px;top:168px;font-size:8.5px;color:#333;">2</span>
<span class="t" style="left:260.94px;top:168px;font-size:8.5px;color:#333;">3</span>
<span class="t" style="left:286.94px;top:168px;font-size:8.5px;color:#333;">4</span>
<span class="t" style="left:313.94px;top:168px;font-size:8.5px;color:#333;">5</span>
<span class="t" style="left:339.94px;top:168px;font-size:8.5px;color:#333;">6</span>
<span class="t" style="left:365.94px;top:168px;font-size:8.5px;color:#333;">7</span>
<span class="t" style="left:392.94px;top:168px;font-size:8.5px;color:#333;">8</span>
<span class="t" style="left:418.94px;top:168px;font-size:8.5px;color:#333;">9</span>
<span class="t" style="left:443.57px;top:168px;font-size:8.5px;color:#333;">10</span>
<span class="t" style="left:469.89px;top:168px;font-size:8.5px;color:#333;">11</span>
<span class="t" style="left:495.57px;top:168px;font-size:8.5px;color:#333;">12</span>
<span class="t" style="left:522.57px;top:168px;font-size:8.5px;color:#333;">13</span>
<span class="t" style="left:548.57px;top:168px;font-size:8.5px;color:#333;">14</span>
<span class="t" style="left:575.57px;top:168px;font-size:8.5px;color:#333;">15</span>
<span class="t" style="left:601.57px;top:168px;font-size:8.5px;color:#333;">16</span>
<span class="t" style="left:627.57px;top:168px;font-size:8.5px;color:#333;">17</span>
<span class="t" style="left:654.57px;top:168px;font-size:8.5px;color:#333;">18</span>
<svg class="b" style="left:179px;top:163px;" width="11" height="23" viewBox="0 0 11 23"><g transform="translate(0.5 0)"><path d="M0.6 0.5h8.4v2.2l-4.2 4.2l-4.2-4.2z" fill="#fff" stroke="#8a8a8a" stroke-width="1"/><path d="M0.6 13.6v-2.4l4.2-4.2l4.2 4.2v2.4z" fill="#fff" stroke="#8a8a8a" stroke-width="1"/><rect x="0.6" y="15.3" width="8.4" height="6.4" fill="#fff" stroke="#8a8a8a" stroke-width="1"/></g></svg>
<svg class="b" style="left:614px;top:170px;" width="11" height="9" viewBox="0 0 11 9"><g transform="translate(0.7 0)"><path d="M0.6 8.2v-3l4.2-4.4l4.2 4.4v3z" fill="#fff" stroke="#8a8a8a" stroke-width="1"/></g></svg>
<div class="b" style="left:0px;top:161px;width:22px;height:21px;background:#dcdcdc;"></div>
<div class="b" style="left:3.5px;top:165px;width:14.5px;height:13px;background:#fdfdfd;"></div>
<svg class="b" style="left:8px;top:170px;" width="6" height="6" viewBox="0 0 6 6"><path d="M1 0v5h5" fill="none" stroke="#555" stroke-width="1.6"/></svg>
<div class="b" style="left:5px;top:195px;width:11px;height:551px;background:#fff;"></div>
<div class="b" style="left:5px;top:195px;width:11px;height:55px;background:#c6c6c6;"></div>
<svg class="b" style="left:5px;top:195px;" width="11" height="551" viewBox="0 0 11 551"><rect x="6.6" y="9" width="1.6" height="1" fill="#3c3c3c"/><rect x="5.5" y="15" width="4.5" height="1" fill="#3c3c3c"/><rect x="6.6" y="22" width="1.6" height="1" fill="#3c3c3c"/><rect x="6.6" y="35" width="1.6" height="1" fill="#3c3c3c"/><rect x="5.5" y="42" width="4.5" height="1" fill="#3c3c3c"/><rect x="6.6" y="48" width="1.6" height="1" fill="#3c3c3c"/><rect x="6.6" y="61" width="1.6" height="1" fill="#3c3c3c"/><rect x="5.5" y="68" width="4.5" height="1" fill="#3c3c3c"/><rect x="6.6" y="75" width="1.6" height="1" fill="#3c3c3c"/><rect x="6.6" y="88" width="1.6" height="1" fill="#3c3c3c"/><rect x="5.5" y="94" width="4.5" height="1" fill="#3c3c3c"/><rect x="6.6" y="101" width="1.6" height="1" fill="#3c3c3c"/><rect x="6.6" y="114" width="1.6" height="1" fill="#3c3c3c"/><rect x="5.5" y="121" width="4.5" height="1" fill="#3c3c3c"/><rect x="6.6" y="127" width="1.6" height="1" fill="#3c3c3c"/><rect x="6.6" y="140" width="1.6" height="1" fill="#3c3c3c"/><rect x="5.5" y="147" width="4.5" height="1" fill="#3c3c3c"/><rect x="6.6" y="154" width="1.6" height="1" fill="#3c3c3c"/><rect x="6.6" y="167" width="1.6" height="1" fill="#3c3c3c"/><rect x="5.5" y="173" width="4.5" height="1" fill="#3c3c3c"/><rect x="6.6" y="180" width="1.6" height="1" fill="#3c3c3c"/><rect x="6.6" y="193" width="1.6" height="1" fill="#3c3c3c"/><rect x="5.5" y="200" width="4.5" height="1" fill="#3c3c3c"/><rect x="6.6" y="206" width="1.6" height="1" fill="#3c3c3c"/><rect x="6.6" y="219" width="1.6" height="1" fill="#3c3c3c"/><rect x="5.5" y="226" width="4.5" height="1" fill="#3c3c3c"/><rect x="6.6" y="232" width="1.6" height="1" fill="#3c3c3c"/><rect x="6.6" y="246" width="1.6" height="1" fill="#3c3c3c"/><rect x="5.5" y="252" width="4.5" height="1" fill="#3c3c3c"/><rect x="6.6" y="259" width="1.6" height="1" fill="#3c3c3c"/><rect x="6.6" y="272" width="1.6" height="1" fill="#3c3c3c"/><rect x="5.5" y="279" width="4.5" height="1" fill="#3c3c3c"/><rect x="6.6" y="285" width="1.6" height="1" fill="#3c3c3c"/><rect x="6.6" y="298" width="1.6" height="1" fill="#3c3c3c"/><rect x="5.5" y="305" width="4.5" height="1" fill="#3c3c3c"/><rect x="6.6" y="311" width="1.6" height="1" fill="#3c3c3c"/><rect x="6.6" y="325" width="1.6" height="1" fill="#3c3c3c"/><rect x="5.5" y="331" width="4.5" height="1" fill="#3c3c3c"/><rect x="6.6" y="338" width="1.6" height="1" fill="#3c3c3c"/><rect x="6.6" y="351" width="1.6" height="1" fill="#3c3c3c"/><rect x="5.5" y="357" width="4.5" height="1" fill="#3c3c3c"/><rect x="6.6" y="364" width="1.6" height="1" fill="#3c3c3c"/><rect x="6.6" y="377" width="1.6" height="1" fill="#3c3c3c"/><rect x="5.5" y="384" width="4.5" height="1" fill="#3c3c3c"/><rect x="6.6" y="390" width="1.6" height="1" fill="#3c3c3c"/><rect x="6.6" y="404" width="1.6" height="1" fill="#3c3c3c"/><rect x="5.5" y="410" width="4.5" height="1" fill="#3c3c3c"/><rect x="6.6" y="417" width="1.6" height="1" fill="#3c3c3c"/><rect x="6.6" y="430" width="1.6" height="1" fill="#3c3c3c"/><rect x="5.5" y="436" width="4.5" height="1" fill="#3c3c3c"/><rect x="6.6" y="443" width="1.6" height="1" fill="#3c3c3c"/><rect x="6.6" y="456" width="1.6" height="1" fill="#3c3c3c"/><rect x="5.5" y="463" width="4.5" height="1" fill="#3c3c3c"/><rect x="6.6" y="469" width="1.6" height="1" fill="#3c3c3c"/><rect x="6.6" y="483" width="1.6" height="1" fill="#3c3c3c"/><rect x="5.5" y="489" width="4.5" height="1" fill="#3c3c3c"/><rect x="6.6" y="496" width="1.6" height="1" fill="#3c3c3c"/><rect x="6.6" y="509" width="1.6" height="1" fill="#3c3c3c"/><rect x="5.5" y="515" width="4.5" height="1" fill="#3c3c3c"/><rect x="6.6" y="522" width="1.6" height="1" fill="#3c3c3c"/><rect x="6.6" y="535" width="1.6" height="1" fill="#3c3c3c"/><rect x="5.5" y="542" width="4.5" height="1" fill="#3c3c3c"/><rect x="6.6" y="548" width="1.6" height="1" fill="#3c3c3c"/></svg>
<span class="t" style="left:12px;top:197.5px;font-size:8.5px;color:#333;transform-origin:50% 50%;transform:translate(-50%,-50%) rotate(-90deg);">2</span>
<span class="t" style="left:12px;top:223.5px;font-size:8.5px;color:#333;transform-origin:50% 50%;transform:translate(-50%,-50%) rotate(-90deg);">1</span>
<span class="t" style="left:12px;top:276.5px;font-size:8.5px;color:#333;transform-origin:50% 50%;transform:translate(-50%,-50%) rotate(-90deg);">1</span>
<span class="t" style="left:12px;top:302.5px;font-size:8.5px;color:#333;transform-origin:50% 50%;transform:translate(-50%,-50%) rotate(-90deg);">2</span>
<span class="t" style="left:12px;top:328.5px;font-size:8.5px;color:#333;transform-origin:50% 50%;transform:translate(-50%,-50%) rotate(-90deg);">3</span>
<span class="t" style="left:12px;top:355.5px;font-size:8.5px;color:#333;transform-origin:50% 50%;transform:translate(-50%,-50%) rotate(-90deg);">4</span>
<span class="t" style="left:12px;top:381.5px;font-size:8.5px;color:#333;transform-origin:50% 50%;transform:translate(-50%,-50%) rotate(-90deg);">5</span>
<span class="t" style="left:12px;top:407.5px;font-size:8.5px;color:#333;transform-origin:50% 50%;transform:translate(-50%,-50%) rotate(-90deg);">6</span>
<span class="t" style="left:12px;top:433.5px;font-size:8.5px;color:#333;transform-origin:50% 50%;transform:translate(-50%,-50%) rotate(-90deg);">7</span>
<span class="t" style="left:12px;top:460.5px;font-size:8.5px;color:#333;transform-origin:50% 50%;transform:translate(-50%,-50%) rotate(-90deg);">8</span>
<span class="t" style="left:12px;top:486.5px;font-size:8.5px;color:#333;transform-origin:50% 50%;transform:translate(-50%,-50%) rotate(-90deg);">9</span>
<span class="t" style="left:12px;top:512.5px;font-size:8.5px;color:#333;transform-origin:50% 50%;transform:translate(-50%,-50%) rotate(-90deg);">10</span>
<span class="t" style="left:12px;top:539.5px;font-size:8.5px;color:#333;transform-origin:50% 50%;transform:translate(-50%,-50%) rotate(-90deg);">11</span>
<span class="t" style="left:12px;top:565.5px;font-size:8.5px;color:#333;transform-origin:50% 50%;transform:translate(-50%,-50%) rotate(-90deg);">12</span>
<span class="t" style="left:12px;top:591.5px;font-size:8.5px;color:#333;transform-origin:50% 50%;transform:translate(-50%,-50%) rotate(-90deg);">13</span>
<span class="t" style="left:12px;top:618.5px;font-size:8.5px;color:#333;transform-origin:50% 50%;transform:translate(-50%,-50%) rotate(-90deg);">14</span>
<span class="t" style="left:12px;top:644.5px;font-size:8.5px;color:#333;transform-origin:50% 50%;transform:translate(-50%,-50%) rotate(-90deg);">15</span>
<span class="t" style="left:12px;top:670.5px;font-size:8.5px;color:#333;transform-origin:50% 50%;transform:translate(-50%,-50%) rotate(-90deg);">16</span>
<span class="t" style="left:12px;top:696.5px;font-size:8.5px;color:#333;transform-origin:50% 50%;transform:translate(-50%,-50%) rotate(-90deg);">17</span>
<span class="t" style="left:12px;top:723.5px;font-size:8.5px;color:#333;transform-origin:50% 50%;transform:translate(-50%,-50%) rotate(-90deg);">18</span>
<div class="b" style="left:126px;top:197px;width:554px;height:560px;background:#fff;border:1px solid #b3b3b3;"></div>
<div class="b" style="left:692px;top:197px;width:554px;height:560px;background:#fff;border:1px solid #b3b3b3;"></div>
<div class="b" style="left:1350px;top:186px;width:15px;height:560px;background:#dadada;"></div>
<div class="b" style="left:1350px;top:187px;width:15px;height:15px;background:#fff;border:1px solid #b5b5b5;"></div>
<svg class="b" style="left:1354px;top:192px;" width="7" height="4" viewBox="0 0 7 4"><path d="M0 4h7l-3.5-4z" fill="#606060"/></svg>
<div class="b" style="left:1350px;top:202px;width:15px;height:52px;background:#fff;border:1px solid #b5b5b5;"></div>
<div class="b" style="left:1350px;top:728px;width:15px;height:15px;background:#fff;border:1px solid #b5b5b5;"></div>
<svg class="b" style="left:1354px;top:734px;" width="7" height="4" viewBox="0 0 7 4"><path d="M0 0h7l-3.5 4z" fill="#606060"/></svg>
<span class="t" style="left:330.13px;top:252px;font-size:8.4px;color:#000;font-weight:700;transform:scaleX(0.9138);-webkit-text-stroke:0.18px #000;">PLAN DE CONTINGENCIA DE EVENTOS</span>
<div class="b" style="left:330px;top:250px;width:1px;height:11px;background:#000;"></div>
<span class="t" style="left:195.77px;top:265px;font-size:8.4px;color:#000;font-weight:700;transform:scaleX(0.8975);-webkit-text-stroke:0.18px #000;">FESTIVIDADES CULTURALES, CÍVICOS Y SOCIALES POR LOS LXXXV ANIVERSARIO DE PARROQUIALIZACIÓN DE</span>
<span class="t" style="left:380.32px;top:278px;font-size:8.4px;color:#000;font-weight:700;transform:scaleX(0.9110);-webkit-text-stroke:0.18px #000;">ATAHUALPA</span>
<span class="t" style="left:324.87px;top:291px;font-size:8.4px;color:#000;font-weight:700;transform:scaleX(0.9141);-webkit-text-stroke:0.18px #000;">PARROQUIA ATAHUALPA – SANTA ELENA</span>
<div class="b" style="left:182px;top:303px;width:441px;height:18px;background:#1f4e79;border:2px solid #4f86c6;"></div>
<span class="t" style="left:185.20px;top:308px;font-size:8.4px;color:#fff;font-weight:700;">1.</span>
<span class="t" style="left:201.80px;top:308px;font-size:8.4px;color:#fff;font-weight:700;transform:scaleX(0.8615);letter-spacing:1.0px;">DATOS GENERALES DE LOS EVENTOS</span>
<div class="b" style="left:189px;top:333px;width:227px;height:14px;background:#e7e7e7;border:1px solid #9c9c9c;"></div>
<div class="b" style="left:415px;top:333px;width:217px;height:14px;border:1px solid #9c9c9c;"></div>
<div class="b" style="left:189px;top:346px;width:227px;height:38px;background:#e7e7e7;border:1px solid #9c9c9c;"></div>
<div class="b" style="left:415px;top:346px;width:217px;height:38px;border:1px solid #9c9c9c;"></div>
<div class="b" style="left:189px;top:383px;width:227px;height:14px;background:#e7e7e7;border:1px solid #9c9c9c;"></div>
<div class="b" style="left:415px;top:383px;width:217px;height:14px;border:1px solid #9c9c9c;"></div>
<div class="b" style="left:189px;top:396px;width:227px;height:26px;background:#e7e7e7;border:1px solid #9c9c9c;"></div>
<div class="b" style="left:415px;top:396px;width:217px;height:26px;border:1px solid #9c9c9c;"></div>
<div class="b" style="left:189px;top:421px;width:227px;height:106px;background:#e7e7e7;border:1px solid #9c9c9c;"></div>
<div class="b" style="left:415px;top:421px;width:217px;height:106px;border:1px solid #9c9c9c;"></div>
<div class="b" style="left:189px;top:526px;width:227px;height:79px;background:#e7e7e7;border:1px solid #9c9c9c;"></div>
<div class="b" style="left:415px;top:526px;width:217px;height:79px;border:1px solid #9c9c9c;"></div>
<div class="b" style="left:189px;top:604px;width:227px;height:26px;background:#e7e7e7;border:1px solid #9c9c9c;"></div>
<div class="b" style="left:415px;top:604px;width:217px;height:26px;border:1px solid #9c9c9c;"></div>
<div class="b" style="left:189px;top:629px;width:227px;height:101px;background:#e7e7e7;border:1px solid #9c9c9c;"></div>
<div class="b" style="left:415px;top:629px;width:138px;height:26px;border:1px solid #9c9c9c;"></div>
<div class="b" style="left:552px;top:629px;width:80px;height:26px;border:1px solid #9c9c9c;"></div>
<div class="b" style="left:415px;top:654px;width:138px;height:26px;border:1px solid #9c9c9c;"></div>
<div class="b" style="left:552px;top:654px;width:80px;height:26px;border:1px solid #9c9c9c;"></div>
<div class="b" style="left:415px;top:679px;width:138px;height:26px;border:1px solid #9c9c9c;"></div>
<div class="b" style="left:552px;top:679px;width:80px;height:26px;border:1px solid #9c9c9c;"></div>
<div class="b" style="left:415px;top:704px;width:138px;height:26px;border:1px solid #9c9c9c;"></div>
<div class="b" style="left:552px;top:704px;width:80px;height:26px;border:1px solid #9c9c9c;"></div>
<span class="t" style="left:195.20px;top:335px;font-size:8.4px;color:#000;font-weight:700;transform:scaleX(0.9716);-webkit-text-stroke:0.18px #000;">Nombre del Organizador:</span>
<span class="t" style="left:421.00px;top:335px;font-size:8.4px;color:#000;font-weight:700;transform:scaleX(0.8784);-webkit-text-stroke:0.18px #000;">PEDRO ORRALA REYES</span>
<span class="t" style="left:195.20px;top:348px;font-size:8.4px;color:#000;font-weight:700;transform:scaleX(0.9733);-webkit-text-stroke:0.18px #000;">Nombre del Evento</span>
<span class="t" style="left:421.00px;top:348px;font-size:8.4px;color:#000;transform:scaleX(0.8745);-webkit-text-stroke:0.1px #000;">FESTIVIDADES CULTURALES, CÍVICOS Y SOCIALES POR</span>
<span class="t" style="left:421.00px;top:361px;font-size:8.4px;color:#000;transform:scaleX(0.9012);-webkit-text-stroke:0.1px #000;">LOS LXXXV ANIVERSARIO DE PARROQUIALIZACIÓN DE</span>
<span class="t" style="left:421.00px;top:373px;font-size:8.4px;color:#000;transform:scaleX(0.9298);-webkit-text-stroke:0.1px #000;">ATAHUALPA.</span>
<span class="t" style="left:195.20px;top:385px;font-size:8.4px;color:#000;font-weight:700;transform:scaleX(0.9503);-webkit-text-stroke:0.18px #000;">Empresa de seguridad</span>
<span class="t" style="left:195.20px;top:398px;font-size:8.4px;color:#000;font-weight:700;transform:scaleX(0.9720);-webkit-text-stroke:0.18px #000;">Nombre del representante legal de Empresa de</span>
<span class="t" style="left:195.20px;top:411px;font-size:8.4px;color:#000;font-weight:700;transform:scaleX(0.9493);-webkit-text-stroke:0.18px #000;">seguridad:</span>
<span class="t" style="left:195.20px;top:423px;font-size:8.4px;color:#000;font-weight:700;transform:scaleX(0.9464);-webkit-text-stroke:0.18px #000;">Nombres de los Eventos:</span>
<span class="t" style="left:438.60px;top:423px;font-size:8.4px;color:#000;transform:scaleX(1.0240);-webkit-text-stroke:0.1px #000;">-</span>
<span class="t" style="left:449.20px;top:423px;font-size:8.4px;color:#000;transform:scaleX(0.8948);-webkit-text-stroke:0.1px #000;">PREGÓN DE INICIO DE FESTIVIDADES</span>
<span class="t" style="left:438.60px;top:436px;font-size:8.4px;color:#000;transform:scaleX(1.0240);-webkit-text-stroke:0.1px #000;">-</span>
<span class="t" style="left:449.20px;top:436px;font-size:8.4px;color:#000;transform:scaleX(0.9089);word-spacing:3.670px;-webkit-text-stroke:0.1px #000;">LOGÍSTICA PARA GRADUACIÓN ESTUDIANTIL</span>
<span class="t" style="left:454.60px;top:449px;font-size:8.4px;color:#000;transform:scaleX(0.8881);-webkit-text-stroke:0.1px #000;">COLECTIVA</span>
<span class="t" style="left:438.60px;top:462px;font-size:8.4px;color:#000;transform:scaleX(1.0240);-webkit-text-stroke:0.1px #000;">-</span>
<span class="t" style="left:449.20px;top:462px;font-size:8.4px;color:#000;transform:scaleX(0.9242);-webkit-text-stroke:0.1px #000;">ELECCIÓN DE REINA DE ATAHUALPA 2026</span>
<span class="t" style="left:438.60px;top:475px;font-size:8.4px;color:#000;transform:scaleX(1.0240);-webkit-text-stroke:0.1px #000;">-</span>
<span class="t" style="left:449.20px;top:475px;font-size:8.4px;color:#000;transform:scaleX(0.9199);-webkit-text-stroke:0.1px #000;">FESTIVAL CULTURAL BARRIAL “MÚSICA Y VIDA”</span>
<span class="t" style="left:438.60px;top:488px;font-size:8.4px;color:#000;transform:scaleX(1.0240);-webkit-text-stroke:0.1px #000;">-</span>
<span class="t" style="left:449.20px;top:488px;font-size:8.4px;color:#000;transform:scaleX(0.8926);word-spacing:5.272px;-webkit-text-stroke:0.1px #000;">DESFILE CÍVICO CULTURAL “ATAHUALPA ES</span>
<span class="t" style="left:454.60px;top:501px;font-size:8.4px;color:#000;transform:scaleX(0.9360);-webkit-text-stroke:0.1px #000;">ARTE”</span>
<span class="t" style="left:438.60px;top:515px;font-size:8.4px;color:#000;transform:scaleX(1.0240);-webkit-text-stroke:0.1px #000;">-</span>
<span class="t" style="left:449.20px;top:515px;font-size:8.4px;color:#000;transform:scaleX(0.8915);-webkit-text-stroke:0.1px #000;">FESTIVAL CULTURAL Y BAILE PÚBLICO</span>
<span class="t" style="left:195.20px;top:528px;font-size:8.4px;color:#000;font-weight:700;transform:scaleX(0.9221);-webkit-text-stroke:0.18px #000;">Fechas de los Eventos:</span>
<span class="t" style="left:438.60px;top:528px;font-size:8.4px;color:#000;transform:scaleX(1.0240);-webkit-text-stroke:0.1px #000;">-</span>
<span class="t" style="left:454.60px;top:528px;font-size:8.4px;color:#000;transform:scaleX(0.9469);-webkit-text-stroke:0.1px #000;">4 DE MARZO DE 2026</span>
<span class="t" style="left:438.60px;top:541px;font-size:8.4px;color:#000;transform:scaleX(1.0240);-webkit-text-stroke:0.1px #000;">-</span>
<span class="t" style="left:454.60px;top:541px;font-size:8.4px;color:#000;transform:scaleX(0.9469);-webkit-text-stroke:0.1px #000;">6 DE MARZO DE 2026</span>
<span class="t" style="left:438.60px;top:554px;font-size:8.4px;color:#000;transform:scaleX(1.0240);-webkit-text-stroke:0.1px #000;">-</span>
<span class="t" style="left:454.60px;top:554px;font-size:8.4px;color:#000;transform:scaleX(0.9469);-webkit-text-stroke:0.1px #000;">7 DE MARZO DE 2026</span>
<span class="t" style="left:438.60px;top:567px;font-size:8.4px;color:#000;transform:scaleX(1.0240);-webkit-text-stroke:0.1px #000;">-</span>
<span class="t" style="left:454.60px;top:567px;font-size:8.4px;color:#000;transform:scaleX(0.9570);-webkit-text-stroke:0.1px #000;">11 DE MARZO DE 2026</span>
<span class="t" style="left:438.60px;top:580px;font-size:8.4px;color:#000;transform:scaleX(1.0240);-webkit-text-stroke:0.1px #000;">-</span>
<span class="t" style="left:454.60px;top:580px;font-size:8.4px;color:#000;transform:scaleX(0.9504);-webkit-text-stroke:0.1px #000;">14 DE MARZO DE 2026</span>
<span class="t" style="left:438.60px;top:593px;font-size:8.4px;color:#000;transform:scaleX(1.0240);-webkit-text-stroke:0.1px #000;">-</span>
<span class="t" style="left:454.60px;top:593px;font-size:8.4px;color:#000;transform:scaleX(0.9504);-webkit-text-stroke:0.1px #000;">14 DE MARZO DE 2026</span>
<span class="t" style="left:195.20px;top:606px;font-size:8.4px;color:#000;font-weight:700;transform:scaleX(0.9491);-webkit-text-stroke:0.18px #000;">Dirección de los eventos;</span>
<span class="t" style="left:421.00px;top:606px;font-size:8.4px;color:#000;transform:scaleX(0.8941);-webkit-text-stroke:0.1px #000;">ATAHUALPA, BARRIO CENTRAL ENTRE LAS CALLES 24</span>
<span class="t" style="left:421.00px;top:619px;font-size:8.4px;color:#000;transform:scaleX(0.8969);-webkit-text-stroke:0.1px #000;">DE JULIO Y 9 DE OCTUBRE.</span>
<span class="t" style="left:421.00px;top:631px;font-size:8.4px;color:#000;font-weight:700;transform:scaleX(0.9690);-webkit-text-stroke:0.18px #000;">Evento Micro:</span>
<span class="t" style="left:476.60px;top:631px;font-size:8.4px;color:#000;transform:scaleX(0.9824);-webkit-text-stroke:0.1px #000;">Desde 25 hasta</span>
<span class="t" style="left:421.00px;top:644px;font-size:8.4px;color:#000;transform:scaleX(0.9953);-webkit-text-stroke:0.1px #000;">500 personas</span>
<span class="t" style="left:421.00px;top:656px;font-size:8.4px;color:#000;font-weight:700;transform:scaleX(0.9675);-webkit-text-stroke:0.18px #000;">Evento Meso:</span>
<span class="t" style="left:475.60px;top:656px;font-size:8.4px;color:#000;transform:scaleX(0.9848);-webkit-text-stroke:0.1px #000;">Desde 501 hasta</span>
<span class="t" style="left:421.00px;top:669px;font-size:8.4px;color:#000;-webkit-text-stroke:0.1px #000;">1500 personas</span>
<span class="t" style="left:560.75px;top:656px;font-size:8.4px;color:#000;transform:scaleX(0.9112);-webkit-text-stroke:0.1px #000;">1200 PERSONAS</span>
<span class="t" style="left:421.00px;top:681px;font-size:8.4px;color:#000;font-weight:700;transform:scaleX(0.9699);-webkit-text-stroke:0.18px #000;">Evento Macro:</span>
<span class="t" style="left:479.20px;top:681px;font-size:8.4px;color:#000;transform:scaleX(0.9869);-webkit-text-stroke:0.1px #000;">Desde 1501 hasta</span>
<span class="t" style="left:421.00px;top:694px;font-size:8.4px;color:#000;-webkit-text-stroke:0.1px #000;">5000 personas</span>
<span class="t" style="left:421.00px;top:706px;font-size:8.4px;color:#000;font-weight:700;transform:scaleX(0.9699);-webkit-text-stroke:0.18px #000;">Evento Mega:</span>
<span class="t" style="left:477.60px;top:706px;font-size:8.4px;color:#000;transform:scaleX(1.0171);-webkit-text-stroke:0.1px #000;">Más</span>
<span class="t" style="left:496.00px;top:706px;font-size:8.4px;color:#000;-webkit-text-stroke:0.1px #000;">de  5001</span>
<div class="b" style="left:496px;top:713px;width:33px;height:3px;border-top:1px solid #4a76c4;border-bottom:1px solid #4a76c4;"></div>
<span class="t" style="left:421.00px;top:719px;font-size:8.4px;color:#000;transform:scaleX(0.9932);-webkit-text-stroke:0.1px #000;">personas</span>
<div class="b" style="left:182px;top:742px;width:441px;height:8px;background:#1f4e79;border:2px solid #4f86c6;"></div>
<div class="b" style="left:749px;top:250px;width:377px;height:26px;background:#e7e7e7;border:1px solid #9c9c9c;"></div>
<div class="b" style="left:1125px;top:250px;width:73px;height:26px;background:#e7e7e7;border:1px solid #9c9c9c;"></div>
<span class="t" style="left:755.20px;top:252px;font-size:8.4px;color:#000;font-weight:700;transform:scaleX(0.9104);-webkit-text-stroke:0.18px #000;">EN CASO DE USO DE PIROTECNIA (LA MISMA QUE DEBERÁ ESTAR AUTORIZADA POR EL</span>
<span class="t" style="left:755.20px;top:265px;font-size:8.4px;color:#000;font-weight:700;transform:scaleX(0.9402);-webkit-text-stroke:0.18px #000;">ORGANISMO COMPETENTE)</span>
<span class="t" style="left:1140.40px;top:252px;font-size:8.4px;color:#000;font-weight:700;transform:scaleX(0.9161);-webkit-text-stroke:0.18px #000;">NO APLICA</span>
<div class="b" style="left:749px;top:275px;width:153px;height:14px;background:#e7e7e7;border:1px solid #9c9c9c;"></div>
<div class="b" style="left:901px;top:275px;width:73px;height:14px;border:1px solid #9c9c9c;"></div>
<div class="b" style="left:973px;top:275px;width:67px;height:14px;border:1px solid #9c9c9c;"></div>
<div class="b" style="left:1039px;top:275px;width:87px;height:14px;border:1px solid #9c9c9c;"></div>
<div class="b" style="left:1125px;top:275px;width:73px;height:14px;border:1px solid #9c9c9c;"></div>
<span class="t" style="left:755.20px;top:277px;font-size:8.4px;color:#000;font-weight:700;transform:scaleX(0.9626);-webkit-text-stroke:0.18px #000;">Instalación de Pirotecnia</span>
<span class="t" style="left:1131.00px;top:277px;font-size:8.4px;color:#000;transform:scaleX(1.0528);-webkit-text-stroke:0.1px #000;">N/A</span>
<div class="b" style="left:749px;top:288px;width:153px;height:13px;background:#e7e7e7;border:1px solid #9c9c9c;"></div>
<div class="b" style="left:901px;top:288px;width:73px;height:13px;border:1px solid #9c9c9c;"></div>
<div class="b" style="left:973px;top:288px;width:67px;height:13px;border:1px solid #9c9c9c;"></div>
<div class="b" style="left:1039px;top:288px;width:87px;height:13px;border:1px solid #9c9c9c;"></div>
<div class="b" style="left:1125px;top:288px;width:73px;height:13px;border:1px solid #9c9c9c;"></div>
<span class="t" style="left:755.20px;top:290px;font-size:8.4px;color:#000;font-weight:700;transform:scaleX(0.9574);-webkit-text-stroke:0.18px #000;">Activación de Pirotecnia</span>
<span class="t" style="left:1131.00px;top:290px;font-size:8.4px;color:#000;transform:scaleX(1.0528);-webkit-text-stroke:0.1px #000;">N/A</span>
<span class="t" style="left:751.00px;top:303px;font-size:8.4px;color:#000;font-weight:700;transform:scaleX(0.9276);-webkit-text-stroke:0.18px #000;">NOTA: COMPRENDIDO EN EL NUMERAL 9. DEL PLANO OPERATIVO</span>
<div class="b" style="left:749px;top:320px;width:377px;height:26px;background:#e7e7e7;border:1px solid #9c9c9c;"></div>
<div class="b" style="left:1125px;top:320px;width:73px;height:26px;background:#e7e7e7;border:1px solid #9c9c9c;"></div>
<span class="t" style="left:755.20px;top:322px;font-size:8.4px;color:#000;font-weight:700;transform:scaleX(0.9136);-webkit-text-stroke:0.18px #000;">PREGÓN DE INICIO DE FESTIVIDADES, A REALIZARSE EL 04 DE MARZO DEL 2026, COMPRENDE</span>
<span class="t" style="left:755.20px;top:335px;font-size:8.4px;color:#000;font-weight:700;transform:scaleX(0.9057);-webkit-text-stroke:0.18px #000;">LO SIGUIENTE:</span>
<div class="b" style="left:749px;top:345px;width:153px;height:14px;background:#e7e7e7;border:1px solid #9c9c9c;"></div>
<div class="b" style="left:901px;top:345px;width:73px;height:14px;border:1px solid #9c9c9c;"></div>
<div class="b" style="left:973px;top:345px;width:67px;height:14px;border:1px solid #9c9c9c;"></div>
<div class="b" style="left:1039px;top:345px;width:87px;height:14px;border:1px solid #9c9c9c;"></div>
<div class="b" style="left:1125px;top:345px;width:73px;height:14px;border:1px solid #9c9c9c;"></div>
<span class="t" style="left:755.20px;top:347px;font-size:8.4px;color:#000;font-weight:700;transform:scaleX(0.8985);-webkit-text-stroke:0.18px #000;">DESCRIPCION</span>
<span class="t" style="left:925.04px;top:347px;font-size:8.4px;color:#000;transform:scaleX(0.8778);-webkit-text-stroke:0.1px #000;">FECHA</span>
<span class="t" style="left:994.39px;top:347px;font-size:8.4px;color:#000;transform:scaleX(0.9465);-webkit-text-stroke:0.1px #000;">INICIO</span>
<span class="t" style="left:1055.75px;top:347px;font-size:8.4px;color:#000;transform:scaleX(0.9271);-webkit-text-stroke:0.1px #000;">FINALIZACION</span>
<span class="t" style="left:1150.27px;top:347px;font-size:8.4px;color:#000;transform:scaleX(0.9278);-webkit-text-stroke:0.1px #000;">HORA</span>
<div class="b" style="left:749px;top:358px;width:153px;height:13px;background:#e7e7e7;border:1px solid #9c9c9c;"></div>
<div class="b" style="left:901px;top:358px;width:73px;height:13px;border:1px solid #9c9c9c;"></div>
<div class="b" style="left:973px;top:358px;width:67px;height:13px;border:1px solid #9c9c9c;"></div>
<div class="b" style="left:1039px;top:358px;width:87px;height:13px;border:1px solid #9c9c9c;"></div>
<div class="b" style="left:1125px;top:358px;width:73px;height:13px;border:1px solid #9c9c9c;"></div>
<span class="t" style="left:755.20px;top:360px;font-size:8.4px;color:#000;font-weight:700;transform:scaleX(0.9252);-webkit-text-stroke:0.18px #000;">INGRESO DE INVITADOS</span>
<span class="t" style="left:915.73px;top:360px;font-size:8.4px;color:#000;transform:scaleX(1.0162);-webkit-text-stroke:0.1px #000;">04-03-2026</span>
<span class="t" style="left:994.14px;top:360px;font-size:8.4px;color:#000;-webkit-text-stroke:0.1px #000;">19H00</span>
<span class="t" style="left:1060.73px;top:360px;font-size:8.4px;color:#000;transform:scaleX(1.0162);-webkit-text-stroke:0.1px #000;">04-03-2026</span>
<span class="t" style="left:1149.14px;top:360px;font-size:8.4px;color:#000;-webkit-text-stroke:0.1px #000;">23H00</span>
<div class="b" style="left:749px;top:370px;width:153px;height:14px;background:#e7e7e7;border:1px solid #9c9c9c;"></div>
<div class="b" style="left:901px;top:370px;width:73px;height:14px;border:1px solid #9c9c9c;"></div>
<div class="b" style="left:973px;top:370px;width:67px;height:14px;border:1px solid #9c9c9c;"></div>
<div class="b" style="left:1039px;top:370px;width:87px;height:14px;border:1px solid #9c9c9c;"></div>
<div class="b" style="left:1125px;top:370px;width:73px;height:14px;border:1px solid #9c9c9c;"></div>
<span class="t" style="left:755.20px;top:372px;font-size:8.4px;color:#000;font-weight:700;transform:scaleX(0.9354);-webkit-text-stroke:0.18px #000;">INICIO DEL PROGRAMA</span>
<span class="t" style="left:915.73px;top:372px;font-size:8.4px;color:#000;transform:scaleX(1.0162);-webkit-text-stroke:0.1px #000;">04-03-2026</span>
<span class="t" style="left:994.14px;top:372px;font-size:8.4px;color:#000;-webkit-text-stroke:0.1px #000;">19H30</span>
<span class="t" style="left:1060.73px;top:372px;font-size:8.4px;color:#000;transform:scaleX(1.0162);-webkit-text-stroke:0.1px #000;">04-03-2026</span>
<span class="t" style="left:1149.14px;top:372px;font-size:8.4px;color:#000;-webkit-text-stroke:0.1px #000;">20H00</span>
<div class="b" style="left:749px;top:383px;width:153px;height:13px;background:#e7e7e7;border:1px solid #9c9c9c;"></div>
<div class="b" style="left:901px;top:383px;width:73px;height:13px;border:1px solid #9c9c9c;"></div>
<div class="b" style="left:973px;top:383px;width:67px;height:13px;border:1px solid #9c9c9c;"></div>
<div class="b" style="left:1039px;top:383px;width:87px;height:13px;border:1px solid #9c9c9c;"></div>
<div class="b" style="left:1125px;top:383px;width:73px;height:13px;border:1px solid #9c9c9c;"></div>
<span class="t" style="left:755.20px;top:385px;font-size:8.4px;color:#000;font-weight:700;transform:scaleX(0.9382);-webkit-text-stroke:0.18px #000;">FIN DE PROGRAMA</span>
<span class="t" style="left:915.73px;top:385px;font-size:8.4px;color:#000;transform:scaleX(1.0162);-webkit-text-stroke:0.1px #000;">04-03-2026</span>
<span class="t" style="left:994.14px;top:385px;font-size:8.4px;color:#000;-webkit-text-stroke:0.1px #000;">23H00</span>
<span class="t" style="left:1060.73px;top:385px;font-size:8.4px;color:#000;transform:scaleX(1.0162);-webkit-text-stroke:0.1px #000;">05-03-2026</span>
<span class="t" style="left:1149.14px;top:385px;font-size:8.4px;color:#000;-webkit-text-stroke:0.1px #000;">00H00</span>
<svg class="b" style="left:768px;top:418px;" width="5" height="5" viewBox="0 0 5 5"><g transform="translate(0.2 0.9)"><circle cx="2" cy="2" r="1.9" fill="#6f97cf"/></g></svg>
<span class="t" style="left:784.80px;top:416px;font-size:8.4px;color:#5b9bd5;font-weight:700;transform:scaleX(0.9079);-webkit-text-stroke:0.18px #5b9bd5;">LOGÍSTICA PARA GRADUACIÓN ESTUDIANTIL COLECTIVA</span>
<div class="b" style="left:749px;top:436px;width:153px;height:26px;background:#e7e7e7;border:1px solid #9c9c9c;"></div>
<div class="b" style="left:901px;top:436px;width:73px;height:26px;background:#e7e7e7;border:1px solid #9c9c9c;"></div>
<div class="b" style="left:973px;top:436px;width:67px;height:26px;background:#e7e7e7;border:1px solid #9c9c9c;"></div>
<div class="b" style="left:1039px;top:436px;width:87px;height:26px;background:#e7e7e7;border:1px solid #9c9c9c;"></div>
<div class="b" style="left:1125px;top:436px;width:73px;height:26px;background:#e7e7e7;border:1px solid #9c9c9c;"></div>
<div class="b" style="left:749px;top:461px;width:153px;height:14px;background:#e7e7e7;border:1px solid #9c9c9c;"></div>
<div class="b" style="left:901px;top:461px;width:73px;height:14px;border:1px solid #9c9c9c;"></div>
<div class="b" style="left:973px;top:461px;width:67px;height:14px;border:1px solid #9c9c9c;"></div>
<div class="b" style="left:1039px;top:461px;width:87px;height:14px;border:1px solid #9c9c9c;"></div>
<div class="b" style="left:1125px;top:461px;width:73px;height:14px;border:1px solid #9c9c9c;"></div>
<div class="b" style="left:749px;top:474px;width:153px;height:38px;background:#e7e7e7;border:1px solid #9c9c9c;"></div>
<div class="b" style="left:901px;top:474px;width:73px;height:38px;border:1px solid #9c9c9c;"></div>
<div class="b" style="left:973px;top:474px;width:67px;height:38px;border:1px solid #9c9c9c;"></div>
<div class="b" style="left:1039px;top:474px;width:87px;height:38px;border:1px solid #9c9c9c;"></div>
<div class="b" style="left:1125px;top:474px;width:73px;height:38px;border:1px solid #9c9c9c;"></div>
<div class="b" style="left:749px;top:511px;width:153px;height:14px;background:#e7e7e7;border:1px solid #9c9c9c;"></div>
<div class="b" style="left:901px;top:511px;width:73px;height:14px;border:1px solid #9c9c9c;"></div>
<div class="b" style="left:973px;top:511px;width:67px;height:14px;border:1px solid #9c9c9c;"></div>
<div class="b" style="left:1039px;top:511px;width:87px;height:14px;border:1px solid #9c9c9c;"></div>
<div class="b" style="left:1125px;top:511px;width:73px;height:14px;border:1px solid #9c9c9c;"></div>
<div class="b" style="left:749px;top:524px;width:153px;height:13px;background:#e7e7e7;border:1px solid #9c9c9c;"></div>
<div class="b" style="left:901px;top:524px;width:73px;height:13px;border:1px solid #9c9c9c;"></div>
<div class="b" style="left:973px;top:524px;width:67px;height:13px;border:1px solid #9c9c9c;"></div>
<div class="b" style="left:1039px;top:524px;width:87px;height:13px;border:1px solid #9c9c9c;"></div>
<div class="b" style="left:1125px;top:524px;width:73px;height:13px;border:1px solid #9c9c9c;"></div>
<div class="b" style="left:749px;top:536px;width:153px;height:21px;background:#e7e7e7;border:1px solid #9c9c9c;"></div>
<div class="b" style="left:901px;top:536px;width:73px;height:21px;border:1px solid #9c9c9c;"></div>
<div class="b" style="left:973px;top:536px;width:67px;height:21px;border:1px solid #9c9c9c;"></div>
<div class="b" style="left:1039px;top:536px;width:87px;height:21px;border:1px solid #9c9c9c;"></div>
<div class="b" style="left:1125px;top:536px;width:73px;height:21px;border:1px solid #9c9c9c;"></div>
<div class="b" style="left:749px;top:556px;width:153px;height:14px;background:#e7e7e7;border:1px solid #9c9c9c;"></div>
<div class="b" style="left:901px;top:556px;width:73px;height:14px;border:1px solid #9c9c9c;"></div>
<div class="b" style="left:973px;top:556px;width:67px;height:14px;border:1px solid #9c9c9c;"></div>
<div class="b" style="left:1039px;top:556px;width:87px;height:14px;border:1px solid #9c9c9c;"></div>
<div class="b" style="left:1125px;top:556px;width:73px;height:14px;border:1px solid #9c9c9c;"></div>
<span class="t" style="left:816.82px;top:444px;font-size:8.4px;color:#000;font-weight:700;transform:scaleX(0.8396);-webkit-text-stroke:0.18px #000;">FASE</span>
<span class="t" style="left:924.92px;top:438px;font-size:8.4px;color:#000;font-weight:700;transform:scaleX(0.8725);-webkit-text-stroke:0.18px #000;">FECHA</span>
<span class="t" style="left:988.68px;top:438px;font-size:8.4px;color:#000;font-weight:700;transform:scaleX(0.9227);-webkit-text-stroke:0.18px #000;">HORA DE</span>
<span class="t" style="left:994.07px;top:451px;font-size:8.4px;color:#000;font-weight:700;transform:scaleX(0.9711);-webkit-text-stroke:0.18px #000;">INICIO</span>
<span class="t" style="left:1069.92px;top:438px;font-size:8.4px;color:#000;font-weight:700;transform:scaleX(0.8725);-webkit-text-stroke:0.18px #000;">FECHA</span>
<span class="t" style="left:1055.09px;top:451px;font-size:8.4px;color:#000;font-weight:700;transform:scaleX(0.9277);-webkit-text-stroke:0.18px #000;">FINALIZACIÓN</span>
<span class="t" style="left:1130.60px;top:438px;font-size:8.4px;color:#000;font-weight:700;transform:scaleX(0.9481);-webkit-text-stroke:0.18px #000;">HIORA</span>
<span class="t" style="left:1130.60px;top:451px;font-size:8.4px;color:#000;font-weight:700;transform:scaleX(0.9277);-webkit-text-stroke:0.18px #000;">FINALIZACION</span>
<span class="t" style="left:755.20px;top:463px;font-size:8.4px;color:#000;font-weight:700;transform:scaleX(0.9869);-webkit-text-stroke:0.18px #000;">Montaje – Preparación</span>
<span class="t" style="left:915.73px;top:463px;font-size:8.4px;color:#000;transform:scaleX(1.0162);-webkit-text-stroke:0.1px #000;">06-03-2026</span>
<span class="t" style="left:994.14px;top:463px;font-size:8.4px;color:#000;-webkit-text-stroke:0.1px #000;">14H30</span>
<span class="t" style="left:1060.73px;top:463px;font-size:8.4px;color:#000;transform:scaleX(1.0162);-webkit-text-stroke:0.1px #000;">06-03-2026</span>
<span class="t" style="left:1149.14px;top:463px;font-size:8.4px;color:#000;-webkit-text-stroke:0.1px #000;">18H00</span>
<span class="t" style="left:755.20px;top:476px;font-size:8.4px;color:#000;font-weight:700;transform:scaleX(0.9724);-webkit-text-stroke:0.18px #000;">Instalación Puesto de Mando</span>
<span class="t" style="left:755.20px;top:489px;font-size:8.4px;color:#000;font-weight:700;transform:scaleX(0.9621);-webkit-text-stroke:0.18px #000;">Unificado (Aplica para eventos</span>
<span class="t" style="left:755.20px;top:501px;font-size:8.4px;color:#000;font-weight:700;transform:scaleX(0.9643);-webkit-text-stroke:0.18px #000;">macro y mega)</span>
<span class="t" style="left:936.07px;top:489px;font-size:8.4px;color:#000;transform:scaleX(1.0240);-webkit-text-stroke:0.1px #000;">-</span>
<span class="t" style="left:1005.07px;top:489px;font-size:8.4px;color:#000;transform:scaleX(1.0240);-webkit-text-stroke:0.1px #000;">-</span>
<span class="t" style="left:1081.07px;top:476px;font-size:8.4px;color:#000;transform:scaleX(1.0240);-webkit-text-stroke:0.1px #000;">-</span>
<span class="t" style="left:1160.07px;top:476px;font-size:8.4px;color:#000;transform:scaleX(1.0240);-webkit-text-stroke:0.1px #000;">-</span>
<span class="t" style="left:755.20px;top:513px;font-size:8.4px;color:#000;font-weight:700;transform:scaleX(0.9464);-webkit-text-stroke:0.18px #000;">Ingreso de Público</span>
<span class="t" style="left:915.73px;top:513px;font-size:8.4px;color:#000;transform:scaleX(1.0162);-webkit-text-stroke:0.1px #000;">06-03-2026</span>
<span class="t" style="left:994.14px;top:513px;font-size:8.4px;color:#000;-webkit-text-stroke:0.1px #000;">19H00</span>
<span class="t" style="left:1060.73px;top:513px;font-size:8.4px;color:#000;transform:scaleX(1.0162);-webkit-text-stroke:0.1px #000;">06-03-2026</span>
<span class="t" style="left:1149.14px;top:513px;font-size:8.4px;color:#000;-webkit-text-stroke:0.1px #000;">23H00</span>
<span class="t" style="left:755.20px;top:526px;font-size:8.4px;color:#000;font-weight:700;transform:scaleX(0.9539);-webkit-text-stroke:0.18px #000;">Presentación</span>
<span class="t" style="left:915.73px;top:526px;font-size:8.4px;color:#000;transform:scaleX(1.0162);-webkit-text-stroke:0.1px #000;">06-03-2026</span>
<span class="t" style="left:994.14px;top:526px;font-size:8.4px;color:#000;-webkit-text-stroke:0.1px #000;">19H30</span>
<span class="t" style="left:1060.73px;top:526px;font-size:8.4px;color:#000;transform:scaleX(1.0162);-webkit-text-stroke:0.1px #000;">07-03-2026</span>
<span class="t" style="left:1149.14px;top:526px;font-size:8.4px;color:#000;-webkit-text-stroke:0.1px #000;">02H00</span>
<span class="t" style="left:755.20px;top:542px;font-size:8.4px;color:#000;font-weight:700;transform:scaleX(0.9524);-webkit-text-stroke:0.18px #000;">Salida de público</span>
<span class="t" style="left:915.73px;top:538px;font-size:8.4px;color:#000;transform:scaleX(1.0162);-webkit-text-stroke:0.1px #000;">07-03-2026</span>
<span class="t" style="left:994.14px;top:542px;font-size:8.4px;color:#000;-webkit-text-stroke:0.1px #000;">00H30</span>
<span class="t" style="left:1060.73px;top:538px;font-size:8.4px;color:#000;transform:scaleX(1.0162);-webkit-text-stroke:0.1px #000;">07-03-2026</span>
<span class="t" style="left:1149.14px;top:538px;font-size:8.4px;color:#000;-webkit-text-stroke:0.1px #000;">02H00</span>
<span class="t" style="left:755.20px;top:558px;font-size:8.4px;color:#000;font-weight:700;transform:scaleX(0.9701);-webkit-text-stroke:0.18px #000;">Reacondicionamiento del área</span>
<span class="t" style="left:915.73px;top:558px;font-size:8.4px;color:#000;transform:scaleX(1.0162);-webkit-text-stroke:0.1px #000;">07-03-2026</span>
<span class="t" style="left:994.14px;top:558px;font-size:8.4px;color:#000;-webkit-text-stroke:0.1px #000;">02H00</span>
<span class="t" style="left:1060.73px;top:558px;font-size:8.4px;color:#000;transform:scaleX(1.0162);-webkit-text-stroke:0.1px #000;">07-03-2026</span>
<span class="t" style="left:1149.14px;top:558px;font-size:8.4px;color:#000;-webkit-text-stroke:0.1px #000;">03H00</span>
<div class="b" style="left:749px;top:569px;width:377px;height:26px;background:#e7e7e7;border:1px solid #9c9c9c;"></div>
<div class="b" style="left:1125px;top:569px;width:73px;height:26px;background:#e7e7e7;border:1px solid #9c9c9c;"></div>
<span class="t" style="left:755.20px;top:571px;font-size:8.4px;color:#000;font-weight:700;transform:scaleX(0.9104);-webkit-text-stroke:0.18px #000;">EN CASO DE USO DE PIROTECNIA (LA MISMA QUE DEBERÁ ESTAR AUTORIZADA POR EL</span>
<span class="t" style="left:755.20px;top:584px;font-size:8.4px;color:#000;font-weight:700;transform:scaleX(0.9402);-webkit-text-stroke:0.18px #000;">ORGANISMO COMPETENTE)</span>
<span class="t" style="left:1140.40px;top:571px;font-size:8.4px;color:#000;font-weight:700;transform:scaleX(0.9161);-webkit-text-stroke:0.18px #000;">NO APLICA</span>
<div class="b" style="left:749px;top:594px;width:153px;height:13px;background:#e7e7e7;border:1px solid #9c9c9c;"></div>
<div class="b" style="left:901px;top:594px;width:73px;height:13px;border:1px solid #9c9c9c;"></div>
<div class="b" style="left:973px;top:594px;width:67px;height:13px;border:1px solid #9c9c9c;"></div>
<div class="b" style="left:1039px;top:594px;width:87px;height:13px;border:1px solid #9c9c9c;"></div>
<div class="b" style="left:1125px;top:594px;width:73px;height:13px;border:1px solid #9c9c9c;"></div>
<span class="t" style="left:755.20px;top:596px;font-size:8.4px;color:#000;font-weight:700;transform:scaleX(0.9626);-webkit-text-stroke:0.18px #000;">Instalación de Pirotecnia</span>
<span class="t" style="left:1131.00px;top:596px;font-size:8.4px;color:#000;transform:scaleX(1.0528);-webkit-text-stroke:0.1px #000;">N/A</span>
<div class="b" style="left:749px;top:606px;width:153px;height:13px;background:#e7e7e7;border:1px solid #9c9c9c;"></div>
<div class="b" style="left:901px;top:606px;width:73px;height:13px;border:1px solid #9c9c9c;"></div>
<div class="b" style="left:973px;top:606px;width:67px;height:13px;border:1px solid #9c9c9c;"></div>
<div class="b" style="left:1039px;top:606px;width:87px;height:13px;border:1px solid #9c9c9c;"></div>
<div class="b" style="left:1125px;top:606px;width:73px;height:13px;border:1px solid #9c9c9c;"></div>
<span class="t" style="left:755.20px;top:608px;font-size:8.4px;color:#000;font-weight:700;transform:scaleX(0.9574);-webkit-text-stroke:0.18px #000;">Activación de Pirotecnia</span>
<span class="t" style="left:1131.00px;top:608px;font-size:8.4px;color:#000;transform:scaleX(1.0528);-webkit-text-stroke:0.1px #000;">N/A</span>
<span class="t" style="left:751.00px;top:622px;font-size:8.4px;color:#000;font-weight:700;transform:scaleX(0.9276);-webkit-text-stroke:0.18px #000;">NOTA: COMPRENDIDO EN EL NUMERAL 9. DEL PLANO OPERATIVO</span>
<div class="b" style="left:749px;top:639px;width:377px;height:26px;background:#e7e7e7;border:1px solid #9c9c9c;"></div>
<div class="b" style="left:1125px;top:639px;width:73px;height:26px;background:#e7e7e7;border:1px solid #9c9c9c;"></div>
<span class="t" style="left:755.20px;top:641px;font-size:8.4px;color:#000;font-weight:700;transform:scaleX(0.9136);-webkit-text-stroke:0.18px #000;">PREGÓN DE INICIO DE FESTIVIDADES, A REALIZARSE EL 04 DE MARZO DEL 2026, COMPRENDE</span>
<span class="t" style="left:755.20px;top:654px;font-size:8.4px;color:#000;font-weight:700;transform:scaleX(0.9057);-webkit-text-stroke:0.18px #000;">LO SIGUIENTE:</span>
<div class="b" style="left:749px;top:664px;width:153px;height:14px;background:#e7e7e7;border:1px solid #9c9c9c;"></div>
<div class="b" style="left:901px;top:664px;width:73px;height:14px;border:1px solid #9c9c9c;"></div>
<div class="b" style="left:973px;top:664px;width:67px;height:14px;border:1px solid #9c9c9c;"></div>
<div class="b" style="left:1039px;top:664px;width:87px;height:14px;border:1px solid #9c9c9c;"></div>
<div class="b" style="left:1125px;top:664px;width:73px;height:14px;border:1px solid #9c9c9c;"></div>
<span class="t" style="left:755.20px;top:666px;font-size:8.4px;color:#000;font-weight:700;transform:scaleX(0.8985);-webkit-text-stroke:0.18px #000;">DESCRIPCION</span>
<span class="t" style="left:925.04px;top:666px;font-size:8.4px;color:#000;transform:scaleX(0.8778);-webkit-text-stroke:0.1px #000;">FECHA</span>
<span class="t" style="left:994.39px;top:666px;font-size:8.4px;color:#000;transform:scaleX(0.9465);-webkit-text-stroke:0.1px #000;">INICIO</span>
<span class="t" style="left:1055.75px;top:666px;font-size:8.4px;color:#000;transform:scaleX(0.9271);-webkit-text-stroke:0.1px #000;">FINALIZACION</span>
<span class="t" style="left:1150.27px;top:666px;font-size:8.4px;color:#000;transform:scaleX(0.9278);-webkit-text-stroke:0.1px #000;">HORA</span>
<div class="b" style="left:749px;top:677px;width:153px;height:13px;background:#e7e7e7;border:1px solid #9c9c9c;"></div>
<div class="b" style="left:901px;top:677px;width:73px;height:13px;border:1px solid #9c9c9c;"></div>
<div class="b" style="left:973px;top:677px;width:67px;height:13px;border:1px solid #9c9c9c;"></div>
<div class="b" style="left:1039px;top:677px;width:87px;height:13px;border:1px solid #9c9c9c;"></div>
<div class="b" style="left:1125px;top:677px;width:73px;height:13px;border:1px solid #9c9c9c;"></div>
<span class="t" style="left:755.20px;top:679px;font-size:8.4px;color:#000;font-weight:700;transform:scaleX(0.9252);-webkit-text-stroke:0.18px #000;">INGRESO DE INVITADOS</span>
<span class="t" style="left:915.73px;top:679px;font-size:8.4px;color:#000;transform:scaleX(1.0162);-webkit-text-stroke:0.1px #000;">06-03-2026</span>
<span class="t" style="left:994.14px;top:679px;font-size:8.4px;color:#000;-webkit-text-stroke:0.1px #000;">19H00</span>
<span class="t" style="left:1060.73px;top:679px;font-size:8.4px;color:#000;transform:scaleX(1.0162);-webkit-text-stroke:0.1px #000;">06-03-2026</span>
<span class="t" style="left:1149.14px;top:679px;font-size:8.4px;color:#000;-webkit-text-stroke:0.1px #000;">23H00</span>
<div class="b" style="left:749px;top:689px;width:153px;height:14px;background:#e7e7e7;border:1px solid #9c9c9c;"></div>
<div class="b" style="left:901px;top:689px;width:73px;height:14px;border:1px solid #9c9c9c;"></div>
<div class="b" style="left:973px;top:689px;width:67px;height:14px;border:1px solid #9c9c9c;"></div>
<div class="b" style="left:1039px;top:689px;width:87px;height:14px;border:1px solid #9c9c9c;"></div>
<div class="b" style="left:1125px;top:689px;width:73px;height:14px;border:1px solid #9c9c9c;"></div>
<span class="t" style="left:755.20px;top:691px;font-size:8.4px;color:#000;font-weight:700;transform:scaleX(0.9354);-webkit-text-stroke:0.18px #000;">INICIO DEL PROGRAMA</span>
<span class="t" style="left:915.73px;top:691px;font-size:8.4px;color:#000;transform:scaleX(1.0162);-webkit-text-stroke:0.1px #000;">06-03-2026</span>
<span class="t" style="left:994.14px;top:691px;font-size:8.4px;color:#000;-webkit-text-stroke:0.1px #000;">19H30</span>
<span class="t" style="left:1060.73px;top:691px;font-size:8.4px;color:#000;transform:scaleX(1.0162);-webkit-text-stroke:0.1px #000;">06-03-2026</span>
<span class="t" style="left:1149.14px;top:691px;font-size:8.4px;color:#000;-webkit-text-stroke:0.1px #000;">21H00</span>
<div class="b" style="left:749px;top:702px;width:153px;height:13px;background:#e7e7e7;border:1px solid #9c9c9c;"></div>
<div class="b" style="left:901px;top:702px;width:73px;height:13px;border:1px solid #9c9c9c;"></div>
<div class="b" style="left:973px;top:702px;width:67px;height:13px;border:1px solid #9c9c9c;"></div>
<div class="b" style="left:1039px;top:702px;width:87px;height:13px;border:1px solid #9c9c9c;"></div>
<div class="b" style="left:1125px;top:702px;width:73px;height:13px;border:1px solid #9c9c9c;"></div>
<span class="t" style="left:755.20px;top:704px;font-size:8.4px;color:#000;font-weight:700;transform:scaleX(0.9382);-webkit-text-stroke:0.18px #000;">FIN DE PROGRAMA</span>
<span class="t" style="left:915.73px;top:704px;font-size:8.4px;color:#000;transform:scaleX(1.0162);-webkit-text-stroke:0.1px #000;">07-03-2026</span>
<span class="t" style="left:994.14px;top:704px;font-size:8.4px;color:#000;-webkit-text-stroke:0.1px #000;">01H00</span>
<span class="t" style="left:1060.73px;top:704px;font-size:8.4px;color:#000;transform:scaleX(1.0162);-webkit-text-stroke:0.1px #000;">07-03-2026</span>
<span class="t" style="left:1149.14px;top:704px;font-size:8.4px;color:#000;-webkit-text-stroke:0.1px #000;">02H00</span>
<svg class="b" style="left:768px;top:731px;" width="5" height="5" viewBox="0 0 5 5"><g transform="translate(0.2 0.4)"><circle cx="2" cy="2" r="1.9" fill="#6f97cf"/></g></svg>
<span class="t" style="left:784.80px;top:729px;font-size:8.4px;color:#5b9bd5;font-weight:700;transform:scaleX(0.9121);-webkit-text-stroke:0.18px #5b9bd5;">ELECCIÓN DE REINA DE ATAHUALPA 2026</span>
<div class="b" style="left:0px;top:745px;width:1365px;height:18px;background:#f3f2f1;"></div>
<div class="b" style="left:0px;top:745px;width:1365px;height:1px;background:#cfcfcf;"></div>
<span class="t" style="left:8.30px;top:751px;font-size:11.5px;color:#444;transform:scaleX(0.9564);">Página 1 de 13</span>
<span class="t" style="left:102.30px;top:751px;font-size:11.5px;color:#444;transform:scaleX(0.9603);">2624 palabras</span>
<svg class="b" style="left:192px;top:750px;" width="14" height="13" viewBox="0 0 14 13"><path d="M0.6 0.6h6v10.6h-6zM6.6 0.6h5.8v4.8" fill="none" stroke="#444" stroke-width="1.2"/><path d="M7.6 5.8l5.6 7M13.2 5.8l-5.6 7" stroke="#444" stroke-width="1.2"/></svg>
<span class="t" style="left:223.70px;top:751px;font-size:11.5px;color:#444;transform:scaleX(0.9926);">Español (España - alfabetización tradicional)</span>
<svg class="b" style="left:962px;top:749px;" width="15" height="15" viewBox="0 0 15 15"><g transform="translate(0 0.3)"><path d="M0.6 4v-3.4h3.4M11 0.6h3.4v3.4M14.4 10v3.4h-3.4M4 13.4h-3.4v-3.4" fill="none" stroke="#444" stroke-width="1.1"/><path d="M4.2 3.2h4.4l2.2 2.2v5.6h-6.6z" fill="none" stroke="#444" stroke-width="1.1"/></g></svg>
<span class="t" style="left:979.60px;top:752px;font-size:11.5px;color:#444;">Concentración</span>
<svg class="b" style="left:1079px;top:749px;" width="15" height="12" viewBox="0 0 15 12"><path d="M7.5 1.6v10M0.6 0.6h5.4c1 0 1.5 0.5 1.5 1c0-0.5 0.5-1 1.5-1h5.4v10.4h-5.4c-1 0-1.5 0.3-1.5 0.8c0-0.5-0.5-0.8-1.5-0.8h-5.4z" fill="none" stroke="#444" stroke-width="1"/><path d="M2.4 3.2h3M2.4 5.4h3M2.4 7.6h3M9.6 3.2h3M9.6 5.4h3M9.6 7.6h3" stroke="#444" stroke-width="0.9"/></svg>
<div class="b" style="left:1106px;top:746px;width:40px;height:17px;background:#cdcdcd;"></div>
<svg class="b" style="left:1120px;top:748px;" width="12" height="14" viewBox="0 0 12 14"><g transform="translate(0 0.6)"><rect x="0.6" y="0.6" width="10.8" height="11.8" fill="#fff" stroke="#444" stroke-width="1.1"/><path d="M2.6 3h6.8M2.6 5h6.8M2.6 7h6.8M2.6 9h6.8" stroke="#444" stroke-width="0.9"/></g></svg>
<svg class="b" style="left:1159px;top:748px;" width="15" height="15" viewBox="0 0 15 15"><g transform="translate(0 0.6)"><path d="M7 11.4h-6.4v-10.8h11v5" fill="none" stroke="#444" stroke-width="1.1"/><path d="M2.6 3h7M2.6 5h7M2.6 7h4" stroke="#444" stroke-width="0.9"/><circle cx="10.2" cy="9.8" r="3.6" fill="#f3f2f1" stroke="#444" stroke-width="1.1"/><path d="M6.6 9.8h7.2M10.2 6.2v7.2" stroke="#444" stroke-width="0.8"/></g></svg>
<div class="b" style="left:1192px;top:755.6px;width:8px;height:1.2px;background:#444;"></div>
<div class="b" style="left:1205px;top:756px;width:100px;height:1px;background:#a6a6a6;"></div>
<div class="b" style="left:1255px;top:754px;width:1px;height:5px;background:#9a9a9a;"></div>
<div class="b" style="left:1237px;top:751px;width:5px;height:11px;background:#707070;"></div>
<svg class="b" style="left:1309px;top:751px;" width="9" height="10" viewBox="0 0 9 10"><g transform="translate(0 0.5)"><path d="M0 4.5h9M4.5 0v9" stroke="#444" stroke-width="1.2"/></g></svg>
<span class="t" style="left:1331.00px;top:752px;font-size:11.5px;color:#444;transform:scaleX(0.9341);">70%</span>
</div></body></html>
